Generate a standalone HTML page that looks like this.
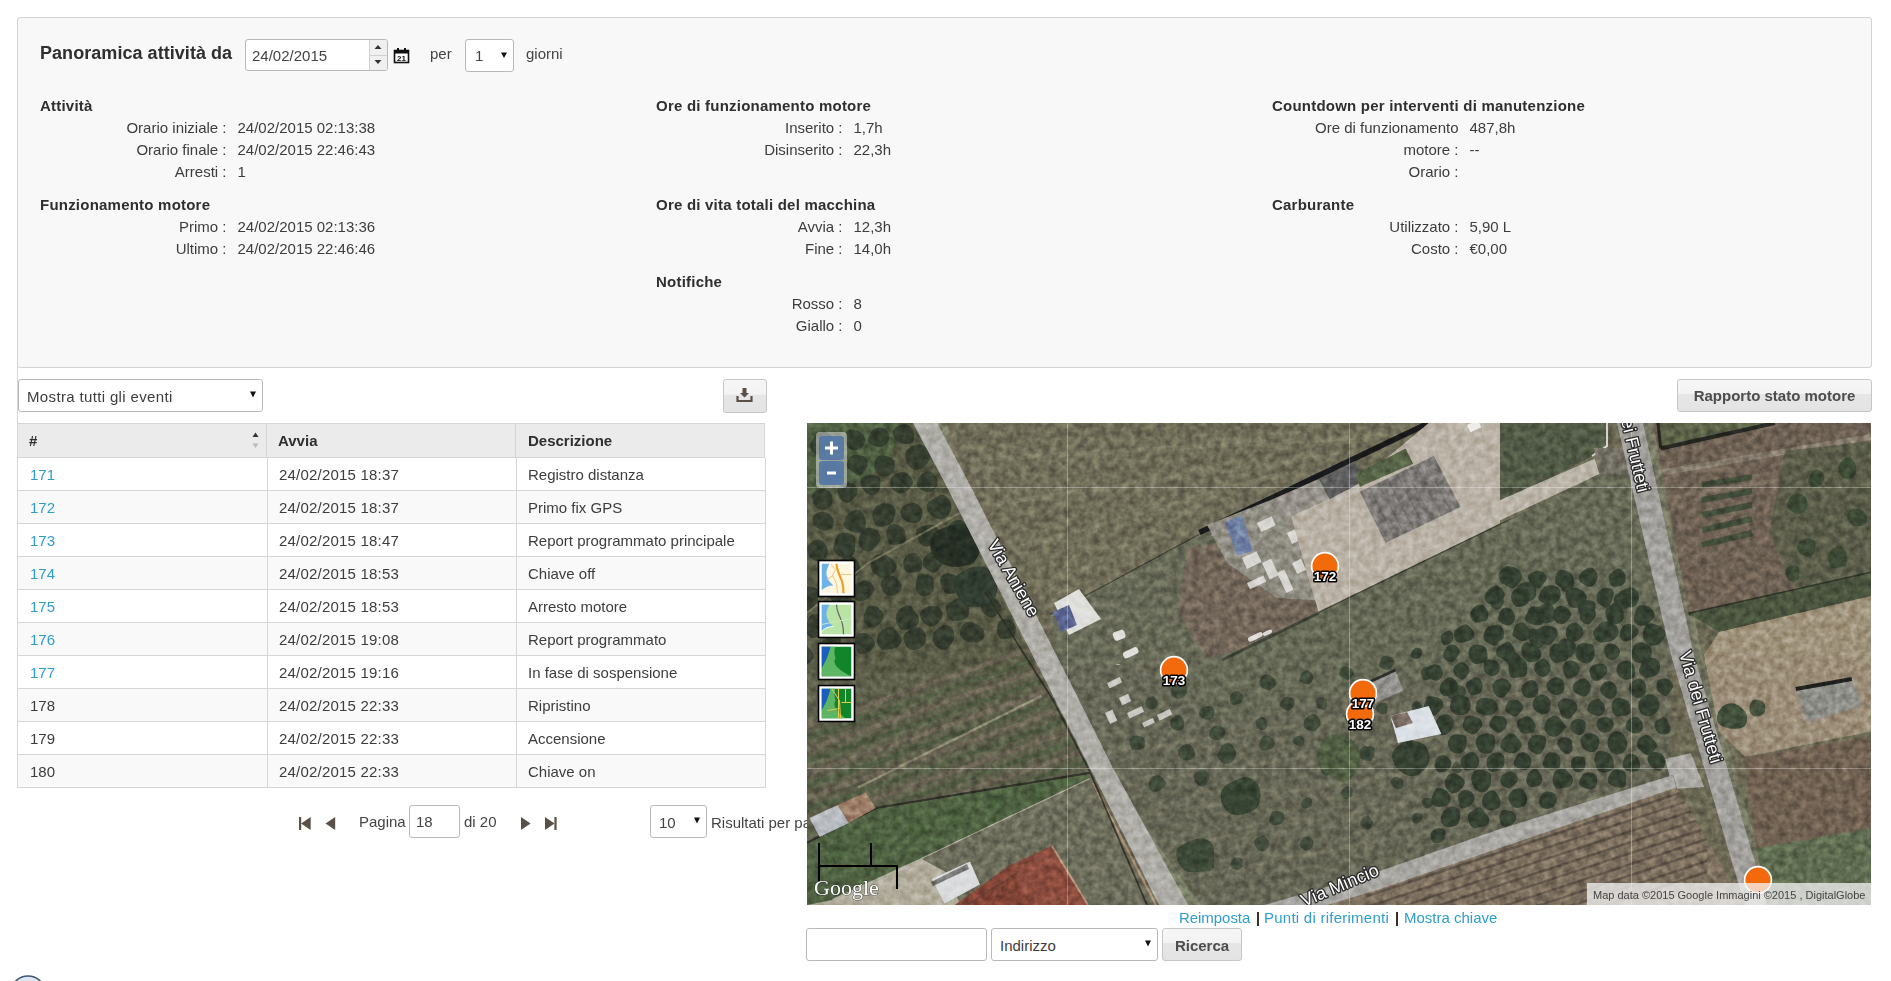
<!DOCTYPE html>
<html><head><meta charset="utf-8">
<style>
*{box-sizing:border-box;margin:0;padding:0}
html,body{width:1891px;height:981px;overflow:hidden;background:#fff}
body{font-family:"Liberation Sans",sans-serif;font-size:15px;color:#333;position:relative}
.a{position:absolute;white-space:nowrap}
#panel{position:absolute;left:17px;top:17px;width:1855px;height:351px;border:1px solid #d3d3d3;border-radius:3px;background:#f8f8f8}
.h{position:absolute;font-weight:bold;line-height:22px;white-space:nowrap;color:#2f2f2f;letter-spacing:0.22px}
.l{position:absolute;line-height:22px;white-space:nowrap;text-align:right;width:300px;color:#3d3d3d}
.v{position:absolute;line-height:22px;white-space:nowrap;color:#3d3d3d}
.inp{position:absolute;background:#fff;border:1px solid #b9b9b9;border-radius:3px}
.btn{position:absolute;border:1px solid #c6c6c6;border-radius:3px;background:linear-gradient(#f6f6f6 0,#f3f3f3 45%,#e6e6e6 46%,#e4e4e4 100%);font-weight:bold;color:#4d4d4d;text-align:center}
.row{position:absolute;left:17px;width:749px;height:33px;border:1px solid #d6d6d6;border-top:0}
.c{position:absolute;top:0;height:32px;line-height:32px;padding-top:1px;color:#3d3d3d;white-space:nowrap}
.c.lnk{color:#2f9dcc}
.vd{position:absolute;top:0;width:1px;height:32px;background:#d6d6d6}
.lk{color:#2f9dcc}
</style></head><body>

<div id="panel"></div>
<div class="h" style="left:40px;top:42px;font-size:18px;letter-spacing:0.05px">Panoramica attività da</div>
<!-- date input -->
<div class="inp" style="left:245px;top:39px;width:143px;height:32px"></div>
<div class="a" style="left:252px;top:45px;line-height:22px;color:#444">24/02/2015</div>
<div class="a" style="left:369px;top:40px;width:18px;height:30px;background:#f0f0f0;border-left:1px solid #d0d0d0;border-radius:0 2px 2px 0"></div>
<div class="a" style="left:370px;top:55px;width:17px;height:1px;background:#d0d0d0"></div>
<svg class="a" style="left:369px;top:40px" width="18" height="30"><path d="M5.5 9 L9 5 L12.5 9 Z M5.5 20 L9 24 L12.5 20 Z" fill="#333"/></svg>
<!-- calendar icon -->
<svg class="a" style="left:393px;top:47px" width="17" height="17" viewBox="0 0 17 17">
<rect x="1.5" y="3.5" width="14" height="12" fill="#fff" stroke="#111" stroke-width="1.6"/>
<rect x="1.5" y="3.5" width="14" height="3" fill="#111"/>
<rect x="4" y="1" width="2" height="4" fill="#111"/><rect x="11" y="1" width="2" height="4" fill="#111"/>
<text x="8.5" y="14.3" font-family="Liberation Sans" font-weight="bold" font-size="8" text-anchor="middle" fill="#111">21</text>
</svg>
<div class="a" style="left:430px;top:43px;line-height:22px;color:#444">per</div>
<div class="inp" style="left:465px;top:39px;width:49px;height:33px"></div>
<div class="a" style="left:475px;top:45px;line-height:22px;color:#444">1</div>
<svg class="a" style="left:500px;top:51px" width="8" height="8"><path d="M1 1.5 L7 1.5 L4 7 Z" fill="#111"/></svg>
<div class="a" style="left:526px;top:43px;line-height:22px;color:#444">giorni</div>

<div class="h" style="left:40px;top:95px">Attività</div>
<div class="l" style="left:-73.5px;top:117px">Orario iniziale :</div>
<div class="v" style="left:237.5px;top:117px">24/02/2015 02:13:38</div>
<div class="l" style="left:-73.5px;top:139px">Orario finale :</div>
<div class="v" style="left:237.5px;top:139px">24/02/2015 22:46:43</div>
<div class="l" style="left:-73.5px;top:161px">Arresti :</div>
<div class="v" style="left:237.5px;top:161px">1</div>
<div class="h" style="left:40px;top:194px">Funzionamento motore</div>
<div class="l" style="left:-73.5px;top:216px">Primo :</div>
<div class="v" style="left:237.5px;top:216px">24/02/2015 02:13:36</div>
<div class="l" style="left:-73.5px;top:238px">Ultimo :</div>
<div class="v" style="left:237.5px;top:238px">24/02/2015 22:46:46</div>
<div class="h" style="left:656px;top:95px">Ore di funzionamento motore</div>
<div class="l" style="left:542.5px;top:117px">Inserito :</div>
<div class="v" style="left:853.5px;top:117px">1,7h</div>
<div class="l" style="left:542.5px;top:139px">Disinserito :</div>
<div class="v" style="left:853.5px;top:139px">22,3h</div>
<div class="h" style="left:656px;top:194px">Ore di vita totali del macchina</div>
<div class="l" style="left:542.5px;top:216px">Avvia :</div>
<div class="v" style="left:853.5px;top:216px">12,3h</div>
<div class="l" style="left:542.5px;top:238px">Fine :</div>
<div class="v" style="left:853.5px;top:238px">14,0h</div>
<div class="h" style="left:656px;top:271px">Notifiche</div>
<div class="l" style="left:542.5px;top:293px">Rosso :</div>
<div class="v" style="left:853.5px;top:293px">8</div>
<div class="l" style="left:542.5px;top:315px">Giallo :</div>
<div class="v" style="left:853.5px;top:315px">0</div>
<div class="h" style="left:1272px;top:95px">Countdown per interventi di manutenzione</div>
<div class="l" style="left:1158.5px;top:117px">Ore di funzionamento</div>
<div class="v" style="left:1469.5px;top:117px">487,8h</div>
<div class="l" style="left:1158.5px;top:139px">motore :</div>
<div class="v" style="left:1469.5px;top:139px">--</div>
<div class="l" style="left:1158.5px;top:161px">Orario :</div>
<div class="h" style="left:1272px;top:194px">Carburante</div>
<div class="l" style="left:1158.5px;top:216px">Utilizzato :</div>
<div class="v" style="left:1469.5px;top:216px">5,90 L</div>
<div class="l" style="left:1158.5px;top:238px">Costo :</div>
<div class="v" style="left:1469.5px;top:238px">€0,00</div>

<!-- left column border -->
<div class="a" style="left:17px;top:367px;width:1px;height:421px;background:#d6d6d6"></div>
<!-- select events -->
<div class="inp" style="left:18px;top:379px;width:245px;height:33px"></div>
<div class="a" style="left:27px;top:386px;line-height:22px;color:#3d3d3d;letter-spacing:0.35px">Mostra tutti gli eventi</div>
<svg class="a" style="left:249px;top:390px" width="8" height="9"><path d="M1 1.5 L7 1.5 L4 7.5 Z" fill="#111"/></svg>
<!-- export button -->
<div class="btn" style="left:723px;top:379px;width:44px;height:34px"></div>
<svg class="a" style="left:736px;top:387px" width="17" height="16" viewBox="0 0 17 16"><path d="M6.5 1 H10.5 V6 H13 L8.5 10.5 L4 6 H6.5 Z" fill="#5a5048"/><path d="M1.5 9 V14 H15.5 V9" fill="none" stroke="#5a5048" stroke-width="2.2"/></svg>
<!-- table header -->
<div class="a" style="left:17px;top:423px;width:748px;height:35px;background:#ebebeb;border:1px solid #d6d6d6"></div>
<div class="a" style="left:266px;top:423px;width:1px;height:35px;background:#d6d6d6"></div>
<div class="a" style="left:515px;top:423px;width:1px;height:35px;background:#d6d6d6"></div>
<div class="a" style="left:29px;top:430px;line-height:22px;font-weight:bold;color:#2f2f2f">#</div>
<div class="a" style="left:278px;top:430px;line-height:22px;font-weight:bold;color:#2f2f2f">Avvia</div>
<div class="a" style="left:528px;top:430px;line-height:22px;font-weight:bold;color:#2f2f2f">Descrizione</div>
<svg class="a" style="left:251px;top:431px" width="9" height="19"><path d="M1.5 6 L4.5 1.5 L7.5 6 Z" fill="#333"/><path d="M1.5 12.5 L4.5 17 L7.5 12.5 Z" fill="#bbb"/></svg>
<div class="row" style="top:458px;background:#fff"><div class="vd" style="left:249px"></div><div class="vd" style="left:498px"></div><div class="c lnk" style="left:12px">171</div><div class="c" style="left:261px;letter-spacing:0.2px">24/02/2015 18:37</div><div class="c" style="left:510px">Registro distanza</div></div>
<div class="row" style="top:491px;background:#f9f9f9"><div class="vd" style="left:249px"></div><div class="vd" style="left:498px"></div><div class="c lnk" style="left:12px">172</div><div class="c" style="left:261px;letter-spacing:0.2px">24/02/2015 18:37</div><div class="c" style="left:510px">Primo fix GPS</div></div>
<div class="row" style="top:524px;background:#fff"><div class="vd" style="left:249px"></div><div class="vd" style="left:498px"></div><div class="c lnk" style="left:12px">173</div><div class="c" style="left:261px;letter-spacing:0.2px">24/02/2015 18:47</div><div class="c" style="left:510px">Report programmato principale</div></div>
<div class="row" style="top:557px;background:#f9f9f9"><div class="vd" style="left:249px"></div><div class="vd" style="left:498px"></div><div class="c lnk" style="left:12px">174</div><div class="c" style="left:261px;letter-spacing:0.2px">24/02/2015 18:53</div><div class="c" style="left:510px">Chiave off</div></div>
<div class="row" style="top:590px;background:#fff"><div class="vd" style="left:249px"></div><div class="vd" style="left:498px"></div><div class="c lnk" style="left:12px">175</div><div class="c" style="left:261px;letter-spacing:0.2px">24/02/2015 18:53</div><div class="c" style="left:510px">Arresto motore</div></div>
<div class="row" style="top:623px;background:#f9f9f9"><div class="vd" style="left:249px"></div><div class="vd" style="left:498px"></div><div class="c lnk" style="left:12px">176</div><div class="c" style="left:261px;letter-spacing:0.2px">24/02/2015 19:08</div><div class="c" style="left:510px">Report programmato</div></div>
<div class="row" style="top:656px;background:#fff"><div class="vd" style="left:249px"></div><div class="vd" style="left:498px"></div><div class="c lnk" style="left:12px">177</div><div class="c" style="left:261px;letter-spacing:0.2px">24/02/2015 19:16</div><div class="c" style="left:510px">In fase di sospensione</div></div>
<div class="row" style="top:689px;background:#f9f9f9"><div class="vd" style="left:249px"></div><div class="vd" style="left:498px"></div><div class="c " style="left:12px">178</div><div class="c" style="left:261px;letter-spacing:0.2px">24/02/2015 22:33</div><div class="c" style="left:510px">Ripristino</div></div>
<div class="row" style="top:722px;background:#fff"><div class="vd" style="left:249px"></div><div class="vd" style="left:498px"></div><div class="c " style="left:12px">179</div><div class="c" style="left:261px;letter-spacing:0.2px">24/02/2015 22:33</div><div class="c" style="left:510px">Accensione</div></div>
<div class="row" style="top:755px;background:#f9f9f9"><div class="vd" style="left:249px"></div><div class="vd" style="left:498px"></div><div class="c " style="left:12px">180</div><div class="c" style="left:261px;letter-spacing:0.2px">24/02/2015 22:33</div><div class="c" style="left:510px">Chiave on</div></div>
<!-- pagination -->
<svg class="a" style="left:296px;top:814px" width="270" height="20" viewBox="0 0 270 20">
<g fill="#5b5046"><rect x="3" y="3" width="2.2" height="13"/><path d="M5 9.5 L14.7 3 V16 Z"/><path d="M29.5 9.5 L39.2 3 V16 Z"/>
<path d="M225 3 L234.6 9.5 L225 16 Z"/><path d="M249 3 L258.6 9.5 L249 16 Z"/><rect x="258.4" y="3" width="2.2" height="13"/></g>
</svg>
<div class="a" style="left:359px;top:811px;line-height:22px;color:#444">Pagina</div>
<div class="inp" style="left:409px;top:805px;width:51px;height:33px"></div>
<div class="a" style="left:416px;top:811px;line-height:22px;color:#444">18</div>
<div class="a" style="left:464px;top:811px;line-height:22px;color:#444">di 20</div>
<div class="inp" style="left:650px;top:805px;width:57px;height:33px"></div>
<div class="a" style="left:659px;top:812px;line-height:22px;color:#444">10</div>
<svg class="a" style="left:693px;top:816px" width="8" height="9"><path d="M1 1.5 L7 1.5 L4 7.5 Z" fill="#111"/></svg>
<div class="a" style="left:711px;top:812px;line-height:22px;color:#444">Risultati per pagina</div>
<!-- rapporto button -->
<div class="btn" style="left:1677px;top:379px;width:195px;height:33px;line-height:31px">Rapporto stato motore</div>

<svg class="a" style="left:807px;top:423px" width="1064" height="482" viewBox="0 0 1064 482"><defs><filter id="nz" x="0" y="0" width="100%" height="100%" color-interpolation-filters="sRGB"><feTurbulence type="fractalNoise" baseFrequency="0.14" numOctaves="3" seed="5"/><feColorMatrix values="1.5 0 0 0 -0.25  1.5 0 0 0 -0.25  1.5 0 0 0 -0.25  0 0 0 0 1"/></filter></defs><rect width="1064" height="482" fill="#6b6954"/>
<path d="M0.0,0.0 L108.0,0.0 L140.0,64.0 L232.0,250.0 L0.0,250.0Z" fill="#595b46" />
<path d="M0.0,0.0 L100.0,0.0 L80.0,40.0 L40.0,64.0 L0.0,70.0Z" fill="#4f5f42" />
<path d="M0.0,250.0 L232.0,250.0 L283.0,350.0 L70.0,385.0 L0.0,420.0Z" fill="#5e5f4b" />
<path d="M0.0,303.0 L290.0,203.0" fill="none" stroke="#716759" stroke-width="4.5" opacity="0.75"/>
<path d="M0.0,315.0 L290.0,215.0" fill="none" stroke="#4e5b40" stroke-width="4.5" opacity="0.75"/>
<path d="M0.0,327.0 L290.0,227.0" fill="none" stroke="#716759" stroke-width="4.5" opacity="0.75"/>
<path d="M0.0,339.0 L290.0,239.0" fill="none" stroke="#4e5b40" stroke-width="4.5" opacity="0.75"/>
<path d="M0.0,351.0 L290.0,251.0" fill="none" stroke="#716759" stroke-width="4.5" opacity="0.75"/>
<path d="M0.0,363.0 L290.0,263.0" fill="none" stroke="#4e5b40" stroke-width="4.5" opacity="0.75"/>
<path d="M0.0,375.0 L290.0,275.0" fill="none" stroke="#716759" stroke-width="4.5" opacity="0.75"/>
<path d="M0.0,387.0 L290.0,287.0" fill="none" stroke="#4e5b40" stroke-width="4.5" opacity="0.75"/>
<path d="M0.0,399.0 L290.0,299.0" fill="none" stroke="#716759" stroke-width="4.5" opacity="0.75"/>
<path d="M0.0,411.0 L290.0,311.0" fill="none" stroke="#4e5b40" stroke-width="4.5" opacity="0.75"/>
<path d="M0.0,423.0 L290.0,323.0" fill="none" stroke="#716759" stroke-width="4.5" opacity="0.75"/>
<path d="M0.0,435.0 L290.0,335.0" fill="none" stroke="#4e5b40" stroke-width="4.5" opacity="0.75"/>
<path d="M51.0,364.5 L234.5,272.8" fill="none" stroke="#8e8973" stroke-width="2.5" />
<path d="M0.0,420.0 L70.0,385.0 L283.0,350.0" fill="none" stroke="#303029" stroke-width="2.5" />
<path d="M0.0,421.0 L70.0,386.0 L283.0,351.0 L283.0,356.0 L114.7,436.0 L25.5,477.0 L0.0,482.0Z" fill="#4f6242" />
<circle cx="30" cy="430" r="9" fill="#445a38" opacity="0.6"/>
<circle cx="70" cy="418" r="9" fill="#445a38" opacity="0.6"/>
<circle cx="110" cy="406" r="9" fill="#445a38" opacity="0.6"/>
<circle cx="150" cy="394" r="9" fill="#445a38" opacity="0.6"/>
<circle cx="190" cy="382" r="9" fill="#445a38" opacity="0.6"/>
<circle cx="230" cy="370" r="9" fill="#445a38" opacity="0.6"/>
<path d="M0.0,482.0 L25.5,477.0 L114.7,436.0 L143.0,451.0 L153.0,482.0Z" fill="#b0ab9a" />
<path d="M25.5,477.0 L114.7,436.0 L283.0,356.0" fill="none" stroke="#aeab9c" stroke-width="2" />
<path d="M114.7,436.0 L283.0,356.0 L295.0,374.0 L349.0,482.0 L153.0,482.0 L143.0,451.0Z" fill="#6d6d5c" />
<path d="M286.0,360.0 L349.0,482.0" fill="none" stroke="#ab8c6f" stroke-width="2.2" />
<path d="M2.5,395.0 L30.6,382.0 L42.0,400.0 L12.7,414.0Z" fill="#b7bbc0" />
<path d="M30.6,382.0 L58.6,369.6 L68.8,385.0 L42.0,400.0Z" fill="#9c7d67" />
<path d="M125.0,456.0 L163.0,438.5 L173.0,461.4 L137.6,480.5Z" fill="#dbdcdd" />
<path d="M124.0,459.0 L160.0,441.0 L162.0,446.0 L126.0,463.0Z" fill="#3d3d3a" opacity="0.6"/>
<path d="M147.8,482.0 L201.0,443.6 L244.7,423.0 L280.0,482.0Z" fill="rgb(128,68,54)" />
<path d="M201.0,443.6 L244.7,423.0 L280.0,482.0 L225.0,482.0Z" fill="rgb(138,76,62)" />
<path d="M160.0,482.0 L210.0,450.0" fill="none" stroke="#6b3d34" stroke-width="1.5" />
<path d="M245.0,423.0 L281.0,482.0" fill="none" stroke="#b39578" stroke-width="2" />
<path d="M25.3,23.8 Q22.6,27.1 19.5,28.8 Q16.4,30.6 12.1,31.4 Q7.8,32.2 5.0,28.6 Q2.2,25.0 3.4,20.9 Q4.6,16.8 7.0,14.2 Q9.4,11.5 13.1,9.7 Q16.8,7.8 21.0,9.7 Q25.1,11.7 26.6,16.1 Q28.0,20.5 25.3,23.8Z" fill="#2f382b" opacity="0.85"/>
<path d="M57.4,20.7 Q55.8,24.6 52.1,26.2 Q48.3,27.7 44.8,26.7 Q41.2,25.7 39.5,22.8 Q37.8,19.8 38.0,16.8 Q38.1,13.7 39.1,9.8 Q40.1,5.8 44.1,6.5 Q48.1,7.2 51.7,8.3 Q55.2,9.3 57.1,13.0 Q58.9,16.7 57.4,20.7Z" fill="#2f382b" opacity="0.85"/>
<path d="M81.5,18.3 Q79.7,22.0 76.3,23.3 Q72.8,24.6 69.5,23.8 Q66.3,23.0 63.1,20.9 Q60.0,18.7 61.2,15.2 Q62.5,11.6 64.3,8.9 Q66.2,6.2 69.6,5.0 Q73.0,3.7 76.8,5.3 Q80.5,6.8 81.9,10.7 Q83.3,14.7 81.5,18.3Z" fill="#2f382b" opacity="0.85"/>
<path d="M107.2,15.5 Q107.0,19.9 102.7,20.7 Q98.3,21.5 95.0,20.5 Q91.6,19.5 89.0,17.2 Q86.3,14.8 85.9,11.0 Q85.5,7.1 88.5,4.8 Q91.5,2.5 94.9,1.7 Q98.3,0.8 101.7,2.3 Q105.1,3.8 106.2,7.5 Q107.4,11.1 107.2,15.5Z" fill="#2f382b" opacity="0.85"/>
<path d="M35.4,51.9 Q34.6,55.5 31.5,58.6 Q28.4,61.6 23.7,61.0 Q19.1,60.4 16.7,56.5 Q14.3,52.6 14.3,48.3 Q14.2,44.0 17.1,40.9 Q20.0,37.8 23.9,38.1 Q27.8,38.3 30.6,40.2 Q33.5,42.1 34.8,45.2 Q36.2,48.3 35.4,51.9Z" fill="#2f382b" opacity="0.85"/>
<path d="M59.9,45.0 Q58.2,48.5 55.0,50.9 Q51.8,53.3 48.7,51.0 Q45.6,48.7 42.6,46.9 Q39.6,45.1 39.9,41.5 Q40.2,38.0 42.2,34.9 Q44.2,31.8 47.8,31.9 Q51.4,32.0 55.2,32.8 Q59.1,33.6 60.3,37.5 Q61.6,41.4 59.9,45.0Z" fill="#2f382b" opacity="0.85"/>
<path d="M87.3,46.1 Q86.4,49.8 83.1,52.0 Q79.8,54.3 75.9,53.3 Q72.1,52.3 69.6,49.3 Q67.2,46.3 67.1,42.4 Q66.9,38.5 69.3,35.3 Q71.7,32.1 75.6,32.4 Q79.4,32.8 82.8,34.1 Q86.2,35.3 87.3,38.9 Q88.3,42.5 87.3,46.1Z" fill="#2f382b" opacity="0.85"/>
<path d="M122.5,37.3 Q120.0,41.2 116.5,44.2 Q113.0,47.2 108.2,46.5 Q103.3,45.8 100.8,41.8 Q98.3,37.8 98.2,33.3 Q98.1,28.8 101.3,25.8 Q104.5,22.8 108.7,21.7 Q112.8,20.5 116.7,22.7 Q120.7,24.9 122.8,29.1 Q125.0,33.3 122.5,37.3Z" fill="#2f382b" opacity="0.85"/>
<path d="M25.1,79.7 Q24.3,83.6 20.6,85.5 Q16.9,87.4 13.1,86.5 Q9.2,85.5 7.4,82.3 Q5.5,79.1 4.9,75.5 Q4.2,71.8 6.9,69.1 Q9.5,66.4 13.1,66.1 Q16.6,65.7 20.2,66.9 Q23.8,68.2 24.8,71.9 Q25.8,75.7 25.1,79.7Z" fill="#2f382b" opacity="0.85"/>
<path d="M49.2,72.7 Q46.8,75.4 44.4,78.0 Q42.1,80.6 38.6,79.7 Q35.1,78.9 33.3,76.0 Q31.4,73.1 30.6,69.6 Q29.7,66.1 32.4,63.5 Q35.0,60.9 38.6,60.1 Q42.1,59.2 45.8,60.7 Q49.5,62.2 50.5,66.0 Q51.6,69.9 49.2,72.7Z" fill="#2f382b" opacity="0.85"/>
<path d="M72.6,65.4 Q72.0,68.6 69.1,71.1 Q66.3,73.6 62.9,72.0 Q59.4,70.5 57.4,67.9 Q55.3,65.4 53.9,61.6 Q52.5,57.8 55.5,55.0 Q58.5,52.1 62.3,51.9 Q66.1,51.6 70.0,52.9 Q73.8,54.1 73.5,58.1 Q73.1,62.1 72.6,65.4Z" fill="#2f382b" opacity="0.85"/>
<path d="M104.9,62.6 Q102.7,65.8 99.9,67.9 Q97.1,70.1 93.1,70.1 Q89.0,70.2 86.1,67.0 Q83.2,63.9 83.2,59.5 Q83.3,55.1 86.6,52.7 Q89.9,50.3 93.6,49.3 Q97.2,48.2 100.2,50.5 Q103.1,52.8 105.1,56.2 Q107.0,59.5 104.9,62.6Z" fill="#2f382b" opacity="0.85"/>
<path d="M130.3,61.8 Q129.6,65.6 126.1,67.6 Q122.6,69.7 118.7,68.8 Q114.8,67.8 111.9,65.0 Q108.9,62.2 110.2,58.4 Q111.4,54.6 113.7,52.3 Q115.9,49.9 119.1,48.8 Q122.3,47.7 125.1,49.7 Q127.9,51.7 129.5,54.8 Q131.1,57.9 130.3,61.8Z" fill="#2f382b" opacity="0.85"/>
<path d="M26.8,101.3 Q25.9,105.0 22.5,106.6 Q19.1,108.3 15.7,107.3 Q12.2,106.4 9.0,104.1 Q5.8,101.9 5.5,97.6 Q5.3,93.4 8.6,91.0 Q12.0,88.6 15.4,88.7 Q18.8,88.8 21.4,90.4 Q24.0,92.0 25.8,94.9 Q27.7,97.7 26.8,101.3Z" fill="#2f382b" opacity="0.85"/>
<path d="M58.9,102.1 Q58.9,106.5 54.9,108.5 Q50.8,110.5 46.7,109.2 Q42.7,107.9 39.0,105.2 Q35.4,102.5 37.1,98.4 Q38.8,94.2 41.0,91.3 Q43.1,88.3 46.9,86.9 Q50.7,85.5 53.6,88.3 Q56.4,91.1 57.7,94.4 Q58.9,97.7 58.9,102.1Z" fill="#2f382b" opacity="0.85"/>
<path d="M86.9,96.6 Q85.4,100.1 82.2,101.7 Q78.9,103.3 74.8,103.9 Q70.6,104.5 68.1,100.9 Q65.7,97.3 65.3,93.0 Q64.9,88.6 67.7,85.2 Q70.5,81.7 75.1,80.5 Q79.6,79.4 84.0,81.6 Q88.4,83.7 88.4,88.4 Q88.4,93.1 86.9,96.6Z" fill="#2f382b" opacity="0.85"/>
<path d="M114.9,94.1 Q114.2,98.0 110.5,99.4 Q106.8,100.7 103.5,99.8 Q100.1,98.8 96.9,96.6 Q93.8,94.4 93.3,90.1 Q92.7,85.8 96.2,83.5 Q99.7,81.1 103.3,80.3 Q106.9,79.4 110.3,81.2 Q113.7,83.0 114.7,86.6 Q115.7,90.3 114.9,94.1Z" fill="#2f382b" opacity="0.85"/>
<path d="M143.6,88.3 Q142.3,92.3 138.7,94.8 Q135.0,97.3 130.9,95.8 Q126.8,94.3 123.4,91.6 Q120.0,88.8 119.8,84.1 Q119.5,79.4 123.5,77.4 Q127.5,75.4 131.3,72.9 Q135.1,70.3 138.9,73.1 Q142.7,75.8 143.8,80.0 Q144.9,84.2 143.6,88.3Z" fill="#2f382b" opacity="0.85"/>
<path d="M20.4,131.5 Q19.4,135.1 16.3,137.5 Q13.1,140.0 9.5,138.3 Q6.0,136.7 3.4,134.2 Q0.8,131.7 0.2,127.8 Q-0.3,123.8 2.4,120.8 Q5.1,117.8 9.1,116.8 Q13.1,115.8 16.0,118.6 Q18.9,121.3 20.1,124.6 Q21.3,128.0 20.4,131.5Z" fill="#2f382b" opacity="0.85"/>
<path d="M48.0,126.8 Q47.7,131.0 43.9,133.4 Q40.1,135.9 35.7,134.7 Q31.4,133.6 28.5,130.3 Q25.5,127.1 26.6,123.1 Q27.7,119.0 29.3,114.9 Q30.8,110.7 35.5,109.7 Q40.2,108.7 44.4,111.1 Q48.6,113.6 48.5,118.1 Q48.4,122.7 48.0,126.8Z" fill="#2f382b" opacity="0.85"/>
<path d="M72.2,119.3 Q69.9,122.8 66.9,126.0 Q63.9,129.1 59.4,128.2 Q54.9,127.3 53.0,123.4 Q51.2,119.6 51.7,116.0 Q52.3,112.5 54.1,109.2 Q55.8,106.0 59.7,105.0 Q63.6,104.1 67.5,105.9 Q71.4,107.6 72.9,111.7 Q74.5,115.8 72.2,119.3Z" fill="#2f382b" opacity="0.85"/>
<path d="M99.0,115.7 Q99.2,119.8 95.1,120.4 Q91.0,121.0 86.9,121.9 Q82.9,122.7 81.4,118.8 Q79.8,115.0 79.5,111.4 Q79.2,107.9 81.0,104.2 Q82.9,100.5 87.0,101.1 Q91.0,101.8 94.0,103.4 Q97.0,105.1 97.9,108.3 Q98.8,111.6 99.0,115.7Z" fill="#2f382b" opacity="0.85"/>
<path d="M132.4,115.4 Q131.2,119.6 127.2,121.5 Q123.3,123.5 118.8,123.2 Q114.3,123.0 112.3,119.1 Q110.3,115.2 109.3,110.9 Q108.4,106.6 112.3,104.6 Q116.2,102.7 119.6,101.9 Q122.9,101.0 126.5,102.3 Q130.1,103.7 131.9,107.4 Q133.7,111.2 132.4,115.4Z" fill="#2f382b" opacity="0.85"/>
<path d="M160.2,111.8 Q158.6,115.5 155.2,117.3 Q151.7,119.0 147.6,118.9 Q143.6,118.8 141.4,115.4 Q139.2,111.9 139.7,108.3 Q140.2,104.6 142.4,101.8 Q144.5,99.0 148.2,97.4 Q151.9,95.9 155.7,97.9 Q159.5,100.0 160.6,104.0 Q161.7,108.1 160.2,111.8Z" fill="#2f382b" opacity="0.85"/>
<path d="M31.6,156.8 Q30.4,160.9 26.5,162.2 Q22.5,163.5 18.8,162.9 Q15.1,162.3 13.4,159.2 Q11.7,156.0 11.1,152.5 Q10.4,149.1 12.9,146.3 Q15.3,143.5 18.9,142.6 Q22.6,141.8 25.0,144.4 Q27.4,147.1 30.1,149.9 Q32.8,152.8 31.6,156.8Z" fill="#2f382b" opacity="0.85"/>
<path d="M52.2,148.7 Q50.5,152.6 47.0,155.7 Q43.5,158.8 39.0,157.4 Q34.4,156.1 31.7,152.6 Q29.0,149.1 28.5,144.5 Q28.0,140.0 31.8,137.7 Q35.6,135.4 39.4,133.6 Q43.3,131.8 46.9,134.3 Q50.5,136.7 52.2,140.7 Q53.9,144.7 52.2,148.7Z" fill="#2f382b" opacity="0.85"/>
<path d="M88.2,147.5 Q85.3,151.3 81.9,153.8 Q78.5,156.3 74.6,154.8 Q70.8,153.3 67.7,150.7 Q64.5,148.0 63.7,143.4 Q62.8,138.8 65.8,134.9 Q68.9,131.0 73.7,131.1 Q78.5,131.2 82.0,133.7 Q85.4,136.1 88.3,139.9 Q91.2,143.8 88.2,147.5Z" fill="#2f382b" opacity="0.85"/>
<path d="M115.2,144.2 Q114.4,148.2 110.4,148.7 Q106.4,149.2 102.7,149.8 Q98.9,150.4 97.8,146.8 Q96.6,143.2 96.3,140.1 Q95.9,136.9 98.0,134.4 Q100.0,131.9 103.4,130.4 Q106.8,128.9 109.7,131.3 Q112.5,133.8 114.3,137.0 Q116.0,140.2 115.2,144.2Z" fill="#2f382b" opacity="0.85"/>
<path d="M135.1,142.1 Q132.9,145.1 130.3,148.1 Q127.7,151.0 124.2,149.2 Q120.8,147.3 117.9,145.1 Q115.1,142.9 115.6,139.2 Q116.1,135.6 118.4,133.0 Q120.6,130.5 124.1,129.2 Q127.5,127.9 130.7,130.0 Q133.9,132.0 135.6,135.5 Q137.3,139.0 135.1,142.1Z" fill="#2f382b" opacity="0.85"/>
<path d="M169.0,136.8 Q167.9,140.4 164.4,141.6 Q160.9,142.8 157.6,142.3 Q154.2,141.8 151.2,139.5 Q148.2,137.2 148.1,133.2 Q148.1,129.1 150.8,126.2 Q153.6,123.3 157.5,122.0 Q161.4,120.6 164.8,123.1 Q168.2,125.6 169.1,129.4 Q170.1,133.2 169.0,136.8Z" fill="#2f382b" opacity="0.85"/>
<path d="M10.6,179.1 Q10.2,183.5 6.2,186.0 Q2.1,188.5 -2.7,187.8 Q-7.5,187.2 -9.4,182.9 Q-11.3,178.7 -11.3,174.7 Q-11.3,170.7 -9.4,166.4 Q-7.6,162.1 -3.0,162.8 Q1.6,163.6 6.4,164.3 Q11.1,165.1 11.1,169.9 Q11.0,174.7 10.6,179.1Z" fill="#2f382b" opacity="0.85"/>
<path d="M44.5,178.7 Q43.4,182.4 40.3,185.5 Q37.1,188.6 33.0,186.8 Q29.0,185.0 26.8,181.9 Q24.6,178.7 23.0,174.5 Q21.3,170.2 25.0,167.3 Q28.6,164.4 32.9,162.8 Q37.1,161.3 40.1,164.7 Q43.0,168.1 44.3,171.6 Q45.6,175.1 44.5,178.7Z" fill="#2f382b" opacity="0.85"/>
<path d="M65.5,170.9 Q63.0,173.9 60.3,175.9 Q57.7,177.8 53.8,178.1 Q49.9,178.4 46.8,175.4 Q43.7,172.4 43.6,167.9 Q43.5,163.4 47.3,161.5 Q51.1,159.6 54.5,158.2 Q57.9,156.8 61.7,158.4 Q65.4,160.0 66.7,164.0 Q68.0,168.0 65.5,170.9Z" fill="#2f382b" opacity="0.85"/>
<path d="M93.9,166.8 Q91.6,170.0 88.6,171.5 Q85.5,173.0 82.2,172.5 Q78.9,172.0 76.9,169.4 Q74.8,166.7 73.8,163.1 Q72.7,159.4 75.4,156.4 Q78.0,153.4 81.9,152.6 Q85.9,151.8 88.7,154.4 Q91.5,157.0 93.8,160.3 Q96.2,163.5 93.9,166.8Z" fill="#2f382b" opacity="0.85"/>
<path d="M126.7,165.3 Q126.6,169.2 123.1,171.5 Q119.6,173.9 115.4,173.0 Q111.2,172.2 110.0,168.3 Q108.9,164.5 108.9,161.4 Q109.0,158.4 110.1,154.5 Q111.1,150.6 115.2,150.8 Q119.2,151.0 122.8,152.5 Q126.4,153.9 126.6,157.6 Q126.9,161.4 126.7,165.3Z" fill="#2f382b" opacity="0.85"/>
<path d="M153.2,164.2 Q152.0,167.7 148.7,169.5 Q145.3,171.2 141.5,170.9 Q137.7,170.5 136.4,167.1 Q135.0,163.7 133.6,160.1 Q132.3,156.5 134.7,153.1 Q137.2,149.7 141.2,150.4 Q145.2,151.0 148.5,152.3 Q151.8,153.6 153.1,157.1 Q154.4,160.6 153.2,164.2Z" fill="#2f382b" opacity="0.85"/>
<path d="M178.6,163.3 Q176.8,166.8 173.6,168.6 Q170.4,170.4 166.4,170.4 Q162.4,170.5 160.8,166.9 Q159.1,163.3 157.2,159.2 Q155.3,155.1 158.5,151.6 Q161.7,148.1 166.3,147.5 Q170.8,146.9 175.0,148.9 Q179.2,150.9 179.7,155.4 Q180.3,159.9 178.6,163.3Z" fill="#2f382b" opacity="0.85"/>
<path d="M20.5,207.1 Q19.5,211.1 15.8,213.0 Q12.1,214.9 7.6,215.1 Q3.0,215.4 0.3,211.5 Q-2.4,207.7 -1.3,203.6 Q-0.1,199.4 1.5,195.3 Q3.2,191.2 7.7,190.8 Q12.3,190.3 16.2,192.5 Q20.1,194.7 20.8,198.9 Q21.5,203.1 20.5,207.1Z" fill="#2f382b" opacity="0.85"/>
<path d="M49.4,203.0 Q48.9,207.6 44.6,210.0 Q40.4,212.4 35.8,211.2 Q31.3,209.9 28.2,206.5 Q25.1,203.0 25.1,198.4 Q25.1,193.7 28.5,190.8 Q31.9,188.0 36.1,186.5 Q40.3,185.1 43.1,188.4 Q45.9,191.7 47.9,195.0 Q49.9,198.4 49.4,203.0Z" fill="#2f382b" opacity="0.85"/>
<path d="M75.7,197.1 Q73.6,200.0 71.1,202.2 Q68.5,204.5 64.7,204.4 Q60.8,204.3 58.3,201.2 Q55.8,198.1 56.5,194.4 Q57.3,190.7 58.8,186.8 Q60.2,182.9 64.5,182.7 Q68.8,182.5 71.7,185.0 Q74.7,187.4 76.2,190.8 Q77.7,194.2 75.7,197.1Z" fill="#2f382b" opacity="0.85"/>
<path d="M111.6,199.3 Q110.1,203.2 106.4,205.0 Q102.8,206.8 98.2,207.3 Q93.6,207.8 91.3,203.8 Q88.9,199.8 88.8,195.4 Q88.6,191.0 91.4,187.5 Q94.2,184.0 98.7,182.7 Q103.2,181.5 105.8,185.3 Q108.3,189.1 110.7,192.3 Q113.1,195.4 111.6,199.3Z" fill="#2f382b" opacity="0.85"/>
<path d="M134.0,196.5 Q131.7,200.0 128.6,202.2 Q125.4,204.3 122.0,203.0 Q118.5,201.6 116.0,199.1 Q113.6,196.7 113.2,192.9 Q112.8,189.2 115.6,186.8 Q118.4,184.4 121.8,183.4 Q125.3,182.5 129.6,183.4 Q133.9,184.3 135.2,188.7 Q136.4,193.1 134.0,196.5Z" fill="#2f382b" opacity="0.85"/>
<path d="M161.8,190.6 Q161.2,195.0 157.0,196.5 Q152.8,198.0 148.3,198.1 Q143.7,198.2 141.4,194.3 Q139.1,190.4 138.8,186.0 Q138.4,181.7 142.1,179.7 Q145.8,177.6 149.3,175.9 Q152.8,174.2 156.7,176.1 Q160.5,177.9 161.5,182.0 Q162.4,186.2 161.8,190.6Z" fill="#2f382b" opacity="0.85"/>
<path d="M193.3,188.0 Q190.7,190.9 188.2,193.0 Q185.6,195.2 182.5,194.1 Q179.3,192.9 176.8,190.8 Q174.2,188.7 174.0,185.1 Q173.7,181.5 176.6,179.6 Q179.5,177.7 182.7,175.5 Q185.9,173.3 188.7,176.0 Q191.5,178.7 193.7,181.9 Q195.8,185.1 193.3,188.0Z" fill="#2f382b" opacity="0.85"/>
<path d="M6.1,235.5 Q4.3,239.0 1.0,240.7 Q-2.3,242.4 -6.3,242.5 Q-10.4,242.6 -12.9,239.3 Q-15.4,236.0 -14.8,232.1 Q-14.2,228.3 -12.4,224.6 Q-10.5,221.0 -6.4,221.2 Q-2.3,221.3 0.4,223.6 Q3.1,225.8 5.5,228.9 Q7.9,231.9 6.1,235.5Z" fill="#2f382b" opacity="0.85"/>
<path d="M32.8,226.1 Q31.9,229.1 29.4,232.0 Q26.8,234.8 23.1,233.4 Q19.5,232.1 16.2,229.7 Q13.0,227.3 13.3,223.2 Q13.5,219.0 16.9,217.1 Q20.2,215.3 23.6,212.8 Q26.9,210.4 30.7,212.7 Q34.4,214.9 34.1,219.0 Q33.7,223.1 32.8,226.1Z" fill="#2f382b" opacity="0.85"/>
<path d="M67.0,223.9 Q64.9,227.1 61.9,228.9 Q59.0,230.8 55.0,231.0 Q51.1,231.2 49.7,227.5 Q48.4,223.8 47.9,220.4 Q47.3,217.1 49.2,213.6 Q51.1,210.2 55.1,209.9 Q59.1,209.5 62.1,211.8 Q65.0,214.0 67.1,217.3 Q69.2,220.6 67.0,223.9Z" fill="#2f382b" opacity="0.85"/>
<path d="M93.7,219.9 Q91.6,224.2 87.5,225.3 Q83.3,226.4 79.0,226.9 Q74.6,227.3 72.0,223.6 Q69.5,219.9 70.0,215.8 Q70.6,211.7 73.3,209.0 Q76.0,206.3 79.8,204.5 Q83.6,202.8 86.7,205.6 Q89.8,208.5 92.8,212.0 Q95.8,215.6 93.7,219.9Z" fill="#2f382b" opacity="0.85"/>
<path d="M118.1,220.3 Q116.3,223.9 112.9,225.4 Q109.5,226.9 105.7,226.9 Q101.8,226.8 99.6,223.6 Q97.3,220.4 96.6,216.4 Q95.9,212.4 98.9,209.5 Q102.0,206.7 106.0,205.0 Q110.1,203.3 114.0,205.7 Q118.0,208.1 118.9,212.4 Q119.8,216.7 118.1,220.3Z" fill="#2f382b" opacity="0.85"/>
<path d="M146.4,217.2 Q144.9,220.5 142.2,224.1 Q139.4,227.6 134.8,226.6 Q130.2,225.5 127.6,221.9 Q124.9,218.2 125.5,214.0 Q126.1,209.9 128.7,207.0 Q131.4,204.1 135.3,202.5 Q139.2,200.9 142.9,203.4 Q146.5,205.8 147.2,209.8 Q147.9,213.8 146.4,217.2Z" fill="#2f382b" opacity="0.85"/>
<path d="M177.1,213.8 Q175.9,217.9 171.8,218.9 Q167.8,219.9 164.2,219.4 Q160.6,218.9 156.7,216.6 Q152.9,214.4 153.0,209.7 Q153.1,204.9 156.2,201.4 Q159.2,197.9 163.4,199.0 Q167.7,200.0 170.6,201.7 Q173.5,203.3 176.0,206.5 Q178.4,209.6 177.1,213.8Z" fill="#2f382b" opacity="0.85"/>
<path d="M208.4,210.5 Q207.4,214.2 203.9,215.1 Q200.3,216.0 196.7,216.2 Q193.1,216.5 191.6,213.2 Q190.1,210.0 190.0,206.9 Q190.0,203.7 191.4,200.2 Q192.8,196.8 196.7,196.3 Q200.6,195.9 204.0,197.7 Q207.5,199.5 208.4,203.2 Q209.3,206.9 208.4,210.5Z" fill="#2f382b" opacity="0.85"/>
<path d="M172.2,130.3 Q169.7,138.5 161.8,141.6 Q154.0,144.7 145.9,143.9 Q137.8,143.1 130.6,137.4 Q123.4,131.7 123.0,121.8 Q122.5,112.0 130.8,107.6 Q139.1,103.2 146.5,101.7 Q153.9,100.2 163.0,101.8 Q172.2,103.4 173.4,112.7 Q174.7,122.0 172.2,130.3Z" fill="#252d24" opacity="0.95"/>
<path d="M189.0,172.9 Q186.7,180.7 179.1,182.6 Q171.4,184.5 164.3,184.1 Q157.2,183.7 153.1,177.8 Q149.0,171.9 146.9,164.2 Q144.7,156.5 151.1,151.6 Q157.5,146.7 164.8,144.3 Q172.1,141.9 180.1,145.0 Q188.2,148.1 189.7,156.5 Q191.2,165.0 189.0,172.9Z" fill="#2f3b30" opacity="0.9"/>
<path d="M0.0,190.0 L61.0,140.0 L147.0,93.0 L215.0,58.0" fill="none" stroke="#827e64" stroke-width="2" opacity="0.8"/>
<path d="M130.0,0.0 L622.0,0.0 L392.4,109.6 L293.0,165.6 L243.0,192.0 L214.0,150.0 L140.0,64.0Z" fill="#706d59" />
<path d="M150.0,15.0 L620.0,2.0" fill="none" stroke="#696653" stroke-width="5" opacity="0.45"/>
<path d="M162.0,37.0 L590.0,12.0" fill="none" stroke="#837e68" stroke-width="5" opacity="0.45"/>
<path d="M174.0,59.0 L560.0,22.0" fill="none" stroke="#696653" stroke-width="5" opacity="0.45"/>
<path d="M186.0,81.0 L530.0,32.0" fill="none" stroke="#837e68" stroke-width="5" opacity="0.45"/>
<path d="M198.0,103.0 L500.0,42.0" fill="none" stroke="#696653" stroke-width="5" opacity="0.45"/>
<path d="M210.0,125.0 L470.0,52.0" fill="none" stroke="#837e68" stroke-width="5" opacity="0.45"/>
<path d="M222.0,147.0 L440.0,62.0" fill="none" stroke="#696653" stroke-width="5" opacity="0.45"/>
<path d="M234.0,169.0 L410.0,72.0" fill="none" stroke="#837e68" stroke-width="5" opacity="0.45"/>
<path d="M246.0,191.0 L380.0,82.0" fill="none" stroke="#696653" stroke-width="5" opacity="0.45"/>
<path d="M243.0,192.0 L293.0,165.6 L392.4,112.0" fill="none" stroke="#37372e" stroke-width="2.2" />
<path d="M392.4,109.6 L621.7,0.0" fill="none" stroke="#191a1b" stroke-width="5.5" />
<path d="M398.0,117.0 L440.0,97.0" fill="none" stroke="#e3e2de" stroke-width="2.5" />
<path d="M243.0,192.0 L293.0,165.6 L392.0,112.0 L471.0,115.0 L512.0,190.0 L415.0,237.0 L331.0,262.0 L300.0,272.0 L268.0,300.0 L250.0,241.0Z" fill="#686a58" />
<path d="M380.0,125.0 L471.0,112.0 L512.0,190.0 L433.0,227.0 L400.0,235.0 L372.0,190.0Z" fill="#726659" />
<path d="M247.0,180.0 L272.0,166.0 L294.0,196.0 L262.0,212.0Z" fill="#dfdfdc" />
<path d="M246.0,189.0 L262.0,182.0 L270.0,202.0 L254.0,209.0Z" fill="#5a6590" />
<rect x="305" y="210" width="12" height="9" rx="3" fill="#e0dfdb" transform="rotate(-20 305 210)"/>
<rect x="315" y="230" width="16" height="7" rx="3" fill="#e0dfdb" transform="rotate(-25 315 230)"/>
<rect x="300" y="245" width="14" height="7" rx="3" fill="#e0dfdb" transform="rotate(-20 300 245)"/>
<rect x="330" y="290" width="18" height="6" rx="3" fill="#e0dfdb" transform="rotate(-25 330 290)"/>
<rect x="345" y="285" width="12" height="8" rx="3" fill="#e0dfdb" transform="rotate(-20 345 285)"/>
<rect x="440" y="215" width="16" height="5" rx="3" fill="#e0dfdb" transform="rotate(-25 440 215)"/>
<rect x="455" y="210" width="10" height="4" rx="3" fill="#e0dfdb" transform="rotate(-25 455 210)"/>
<rect x="310" y="270" width="10" height="10" rx="3" fill="#e0dfdb" transform="rotate(0 310 270)"/>
<path d="M400.0,102.0 L466.0,76.0 L522.0,76.0 L522.0,178.0 L470.0,175.0 L420.0,140.0Z" fill="#8f8c82" />
<path d="M418.0,99.0 L435.0,92.0 L446.0,128.0 L430.0,133.0Z" fill="#6e7fa3" />
<rect x="435" y="135" width="16" height="12" fill="#e4e3df" opacity="0.85" transform="rotate(-25 435 135)"/>
<rect x="455" y="140" width="10" height="18" fill="#e4e3df" opacity="0.85" transform="rotate(-25 455 140)"/>
<rect x="440" y="160" width="18" height="7" fill="#e4e3df" opacity="0.85" transform="rotate(-25 440 160)"/>
<rect x="470" y="150" width="8" height="22" fill="#e4e3df" opacity="0.85" transform="rotate(-25 470 150)"/>
<rect x="485" y="140" width="10" height="12" fill="#e4e3df" opacity="0.85" transform="rotate(-25 485 140)"/>
<rect x="480" y="110" width="20" height="12" fill="#e4e3df" opacity="0.85" transform="rotate(-25 480 110)"/>
<rect x="450" y="100" width="16" height="10" fill="#e4e3df" opacity="0.85" transform="rotate(-25 450 100)"/>
<path d="M481.5,84.0 L542.7,66.0 L621.7,0.0 L693.0,0.0 L693.0,102.0 L512.0,190.0 L500.0,150.0Z" fill="#b9b1a5" />
<path d="M552.9,68.8 L626.8,33.0 L653.5,84.0 L578.4,119.7Z" fill="#7d7a77" />
<path d="M562.1,64.3 L587.8,115.2" fill="none" stroke="#646260" stroke-width="1" opacity="0.6"/>
<path d="M571.4,59.8 L597.2,110.8" fill="none" stroke="#646260" stroke-width="1" opacity="0.6"/>
<path d="M580.6,55.4 L606.6,106.3" fill="none" stroke="#646260" stroke-width="1" opacity="0.6"/>
<path d="M589.8,50.9 L616.0,101.8" fill="none" stroke="#646260" stroke-width="1" opacity="0.6"/>
<path d="M599.1,46.4 L625.3,97.4" fill="none" stroke="#646260" stroke-width="1" opacity="0.6"/>
<path d="M608.3,42.0 L634.7,92.9" fill="none" stroke="#646260" stroke-width="1" opacity="0.6"/>
<path d="M617.6,37.5 L644.1,88.5" fill="none" stroke="#646260" stroke-width="1" opacity="0.6"/>
<path d="M512.0,56.0 L548.0,38.0 L555.4,58.6 L522.3,76.4Z" fill="#5e5e5f" />
<path d="M548.0,51.0 L598.7,25.5 L606.0,40.8 L553.0,63.7Z" fill="#576347" />
<path d="M466.0,76.0 L512.0,56.0 L522.0,76.0 L470.0,100.0Z" fill="#95918a" />
<path d="M512.0,190.0 L693.0,102.0 L800.0,55.0" fill="none" stroke="#3e4135" stroke-width="3" />
<rect x="660" y="2" width="12" height="8" fill="#efeeec" transform="rotate(-25 660 2)"/>
<path d="M693.0,0.0 L800.0,0.0 L800.0,23.0 L785.0,33.0 L693.0,81.5Z" fill="#515a46" />
<path d="M800.0,0.0 L800.0,23.0 L785.0,33.0" fill="none" stroke="#d7d4cb" stroke-width="2" />
<path d="M683.0,81.5 L787.5,35.7 L792.6,51.0 L683.0,102.0Z" fill="#bab3a7" />
<path d="M787.0,25.0 L826.0,25.0 L826.0,51.0 L792.6,51.0Z" fill="#726f64" />
<path d="M512.0,190.0 L693.0,102.0 L792.6,51.0 L826.0,51.0 L864.0,232.0 L700.0,250.0 L560.0,262.0 L420.0,300.0 L331.0,242.0 L415.0,237.0Z" fill="#666956" />
<path d="M415.0,237.0 L512.0,190.0" fill="none" stroke="#3e4135" stroke-width="3" />
<path d="M707.9,155.0 Q707.2,158.1 704.5,160.0 Q701.8,162.0 698.2,161.6 Q694.6,161.3 693.1,158.2 Q691.5,155.1 691.6,152.0 Q691.7,149.0 693.9,147.1 Q696.1,145.2 699.0,143.4 Q701.8,141.6 703.9,144.3 Q706.0,147.0 707.3,149.5 Q708.6,152.0 707.9,155.0Z" fill="#333e30" opacity="0.85"/>
<path d="M729.0,171.7 Q728.7,175.3 725.3,177.1 Q721.9,178.9 718.0,178.6 Q714.1,178.3 712.2,174.9 Q710.4,171.5 709.4,167.7 Q708.5,163.8 711.9,161.9 Q715.3,159.9 718.5,159.1 Q721.7,158.3 725.4,159.3 Q729.0,160.4 729.2,164.2 Q729.3,168.0 729.0,171.7Z" fill="#333e30" opacity="0.85"/>
<path d="M696.5,180.5 Q695.9,183.0 693.7,184.9 Q691.6,186.9 688.6,186.3 Q685.5,185.7 684.2,183.2 Q682.8,180.6 683.0,178.1 Q683.2,175.5 684.6,173.4 Q686.1,171.2 688.8,170.1 Q691.6,169.1 693.8,171.0 Q696.1,172.9 696.5,175.5 Q697.0,178.0 696.5,180.5Z" fill="#333e30" opacity="0.85"/>
<path d="M748.6,193.5 Q748.4,197.1 745.1,198.7 Q741.8,200.3 738.0,200.2 Q734.1,200.2 731.5,197.1 Q728.8,194.1 728.9,190.0 Q728.9,186.0 732.0,183.7 Q735.0,181.4 738.5,180.1 Q742.0,178.8 744.6,181.4 Q747.2,183.9 748.0,187.0 Q748.7,190.0 748.6,193.5Z" fill="#333e30" opacity="0.85"/>
<path d="M766.9,162.6 Q766.1,165.1 763.9,167.3 Q761.7,169.5 758.4,168.9 Q755.2,168.3 754.1,165.4 Q752.9,162.6 752.8,159.9 Q752.6,157.3 754.3,155.2 Q756.0,153.2 758.7,152.7 Q761.4,152.2 763.7,153.5 Q766.1,154.9 766.9,157.4 Q767.8,160.0 766.9,162.6Z" fill="#333e30" opacity="0.85"/>
<path d="M787.6,187.6 Q786.3,190.3 784.0,192.3 Q781.6,194.3 778.3,194.1 Q774.9,193.9 773.0,191.1 Q771.2,188.2 770.7,184.8 Q770.2,181.4 772.7,179.1 Q775.3,176.8 778.3,176.9 Q781.4,177.0 784.6,177.7 Q787.8,178.5 788.3,181.7 Q788.9,185.0 787.6,187.6Z" fill="#333e30" opacity="0.85"/>
<path d="M810.2,213.3 Q807.8,216.5 804.7,217.8 Q801.6,219.0 798.0,219.3 Q794.4,219.7 791.9,216.8 Q789.4,213.9 789.3,210.0 Q789.3,206.1 791.4,202.4 Q793.5,198.7 797.8,198.6 Q802.0,198.4 805.8,200.2 Q809.5,202.0 811.1,206.0 Q812.7,210.0 810.2,213.3Z" fill="#333e30" opacity="0.85"/>
<path d="M738.2,218.3 Q737.9,221.7 734.9,223.9 Q732.0,226.1 728.8,224.3 Q725.7,222.4 723.8,220.2 Q722.0,217.9 720.8,214.6 Q719.6,211.2 721.9,208.0 Q724.1,204.9 727.8,205.7 Q731.5,206.6 734.8,207.3 Q738.2,208.1 738.3,211.6 Q738.5,215.0 738.2,218.3Z" fill="#333e30" opacity="0.85"/>
<path d="M697.1,212.9 Q697.0,215.8 694.2,217.3 Q691.5,218.7 688.9,217.6 Q686.2,216.5 684.6,214.5 Q683.0,212.5 682.2,209.7 Q681.4,206.9 683.6,204.8 Q685.8,202.7 688.7,201.9 Q691.6,201.0 693.9,202.9 Q696.1,204.9 696.7,207.4 Q697.2,210.0 697.1,212.9Z" fill="#333e30" opacity="0.85"/>
<path d="M822.7,181.1 Q822.5,184.3 819.5,185.5 Q816.5,186.7 813.7,186.0 Q810.8,185.2 809.0,183.0 Q807.1,180.9 806.8,177.9 Q806.5,174.9 808.5,172.6 Q810.5,170.2 813.6,169.4 Q816.7,168.5 818.9,170.7 Q821.2,172.8 822.0,175.4 Q822.8,178.0 822.7,181.1Z" fill="#333e30" opacity="0.85"/>
<path d="M769.0,228.2 Q767.5,231.3 764.7,233.3 Q761.8,235.3 758.3,234.6 Q754.8,233.9 752.5,231.3 Q750.2,228.6 750.1,225.0 Q750.0,221.4 752.3,218.5 Q754.6,215.6 758.1,215.5 Q761.7,215.4 764.4,217.2 Q767.1,219.0 768.8,222.0 Q770.4,225.0 769.0,228.2Z" fill="#333e30" opacity="0.85"/>
<path d="M713.0,238.0 Q712.1,241.0 709.3,242.0 Q706.4,243.0 703.7,242.5 Q701.0,242.0 699.6,239.7 Q698.2,237.5 697.3,234.7 Q696.5,231.9 698.3,229.2 Q700.1,226.5 703.2,226.8 Q706.4,227.2 708.5,228.8 Q710.6,230.3 712.3,232.7 Q714.0,235.0 713.0,238.0Z" fill="#333e30" opacity="0.85"/>
<path d="M646.0,217.3 Q645.5,219.6 643.3,220.7 Q641.2,221.7 638.4,222.1 Q635.6,222.5 634.9,219.8 Q634.2,217.1 633.9,214.9 Q633.6,212.7 635.2,211.1 Q636.8,209.5 639.1,208.4 Q641.4,207.3 643.8,208.5 Q646.3,209.7 646.4,212.4 Q646.6,215.0 646.0,217.3Z" fill="#333e30" opacity="0.85"/>
<path d="M614.9,231.7 Q614.1,233.5 612.6,234.9 Q611.1,236.3 608.9,236.0 Q606.7,235.8 604.8,234.2 Q603.0,232.6 604.0,230.4 Q605.0,228.2 606.1,226.7 Q607.2,225.2 609.1,224.8 Q611.0,224.4 612.7,225.3 Q614.4,226.3 615.1,228.1 Q615.7,230.0 614.9,231.7Z" fill="#333e30" opacity="0.85"/>
<path d="M252.0,241.0 L331.0,242.0 L420.0,300.0 L560.0,262.0 L700.0,250.0 L864.0,232.0 L866.0,352.0 L693.0,406.0 L573.0,448.0 L468.0,482.0 L378.0,482.0 L283.0,345.0Z" fill="#676757" />
<path d="M300.0,330.0 L860.0,250.0" fill="none" stroke="#75745f" stroke-width="4" opacity="0.5"/>
<path d="M308.0,346.0 L860.0,264.0" fill="none" stroke="#5e5e4b" stroke-width="4" opacity="0.5"/>
<path d="M316.0,362.0 L860.0,278.0" fill="none" stroke="#75745f" stroke-width="4" opacity="0.5"/>
<path d="M324.0,378.0 L860.0,292.0" fill="none" stroke="#5e5e4b" stroke-width="4" opacity="0.5"/>
<path d="M332.0,394.0 L860.0,306.0" fill="none" stroke="#75745f" stroke-width="4" opacity="0.5"/>
<path d="M340.0,410.0 L860.0,320.0" fill="none" stroke="#5e5e4b" stroke-width="4" opacity="0.5"/>
<path d="M348.0,426.0 L860.0,334.0" fill="none" stroke="#75745f" stroke-width="4" opacity="0.5"/>
<path d="M356.0,442.0 L860.0,348.0" fill="none" stroke="#5e5e4b" stroke-width="4" opacity="0.5"/>
<path d="M364.0,458.0 L860.0,362.0" fill="none" stroke="#75745f" stroke-width="4" opacity="0.5"/>
<path d="M372.0,474.0 L860.0,376.0" fill="none" stroke="#5e5e4b" stroke-width="4" opacity="0.5"/>
<path d="M377.2,302.9 Q376.9,305.8 374.2,307.1 Q371.5,308.5 368.9,307.5 Q366.3,306.5 364.7,304.5 Q363.1,302.5 363.0,299.9 Q362.8,297.4 364.6,295.5 Q366.4,293.7 369.0,292.3 Q371.6,291.0 373.8,293.0 Q375.9,295.0 376.7,297.5 Q377.5,300.0 377.2,302.9Z" fill="#384434" opacity="0.85"/>
<path d="M406.9,292.7 Q406.3,295.3 403.8,296.3 Q401.3,297.2 399.0,296.5 Q396.6,295.8 394.3,294.4 Q392.0,292.9 392.0,290.0 Q392.0,287.1 394.2,285.5 Q396.5,284.0 398.9,283.3 Q401.3,282.6 404.0,283.5 Q406.6,284.4 407.1,287.2 Q407.5,290.0 406.9,292.7Z" fill="#384434" opacity="0.85"/>
<path d="M436.2,277.1 Q435.1,279.3 433.1,280.2 Q431.1,281.0 428.4,281.8 Q425.7,282.5 424.0,280.2 Q422.3,277.8 422.8,275.2 Q423.3,272.6 424.8,270.6 Q426.3,268.5 428.8,268.1 Q431.3,267.7 433.2,269.2 Q435.2,270.6 436.3,272.8 Q437.4,275.0 436.2,277.1Z" fill="#384434" opacity="0.85"/>
<path d="M468.3,262.8 Q466.8,265.7 464.0,266.5 Q461.3,267.4 459.0,266.6 Q456.6,265.9 454.4,264.3 Q452.3,262.8 452.4,260.1 Q452.6,257.3 454.0,254.6 Q455.4,252.0 458.5,251.6 Q461.6,251.1 464.1,252.8 Q466.6,254.4 468.3,257.2 Q469.9,260.0 468.3,262.8Z" fill="#384434" opacity="0.85"/>
<path d="M505.7,257.1 Q504.9,259.1 503.1,260.5 Q501.2,261.8 498.9,261.3 Q496.6,260.8 494.4,259.4 Q492.1,257.9 492.5,255.2 Q493.0,252.5 494.6,250.4 Q496.1,248.3 498.8,247.3 Q501.5,246.4 503.3,248.5 Q505.2,250.7 505.8,252.8 Q506.4,255.0 505.7,257.1Z" fill="#384434" opacity="0.85"/>
<path d="M546.2,252.1 Q544.9,254.1 543.2,256.1 Q541.4,258.0 539.2,256.6 Q537.0,255.2 534.6,254.0 Q532.2,252.8 532.2,250.0 Q532.1,247.1 534.0,245.0 Q535.8,242.8 538.5,243.3 Q541.1,243.9 543.1,244.8 Q545.2,245.7 546.3,247.8 Q547.5,250.0 546.2,252.1Z" fill="#384434" opacity="0.85"/>
<path d="M586.4,242.0 Q584.8,244.0 583.0,245.6 Q581.3,247.2 578.8,246.8 Q576.3,246.3 574.1,244.6 Q571.8,243.0 572.3,240.2 Q572.8,237.4 574.3,235.1 Q575.8,232.7 578.5,233.0 Q581.2,233.3 583.7,234.0 Q586.3,234.7 587.1,237.4 Q588.0,240.0 586.4,242.0Z" fill="#384434" opacity="0.85"/>
<path d="M337.7,323.1 Q337.4,326.2 334.3,326.6 Q331.2,326.9 328.3,327.5 Q325.3,328.1 324.2,325.3 Q323.0,322.5 322.5,319.8 Q322.0,317.1 323.9,314.9 Q325.8,312.7 328.5,312.8 Q331.3,312.9 334.2,313.4 Q337.2,314.0 337.6,317.0 Q338.1,320.0 337.7,323.1Z" fill="#384434" opacity="0.85"/>
<path d="M387.6,332.8 Q386.6,335.5 384.0,336.6 Q381.3,337.6 378.5,337.5 Q375.7,337.4 373.6,335.3 Q371.4,333.1 371.0,329.9 Q370.6,326.6 373.1,324.5 Q375.6,322.4 378.7,321.3 Q381.7,320.2 383.9,322.6 Q386.0,324.9 387.3,327.5 Q388.6,330.0 387.6,332.8Z" fill="#384434" opacity="0.85"/>
<path d="M428.7,333.2 Q427.7,336.4 424.9,339.1 Q422.1,341.8 418.2,340.9 Q414.3,339.9 412.1,336.8 Q409.9,333.7 411.0,330.4 Q412.2,327.2 413.7,324.4 Q415.1,321.6 418.5,320.4 Q421.9,319.2 424.5,321.6 Q427.0,324.1 428.4,327.1 Q429.8,330.0 428.7,333.2Z" fill="#384434" opacity="0.85"/>
<path d="M467.4,322.6 Q466.3,325.3 463.7,326.0 Q461.2,326.7 458.1,327.6 Q455.1,328.6 453.2,325.9 Q451.3,323.2 452.2,320.3 Q453.0,317.5 454.3,315.0 Q455.7,312.5 458.5,312.5 Q461.3,312.5 463.7,313.7 Q466.1,314.9 467.3,317.4 Q468.5,320.0 467.4,322.6Z" fill="#384434" opacity="0.85"/>
<path d="M513.0,302.7 Q511.5,305.5 509.0,307.0 Q506.5,308.5 503.5,308.1 Q500.6,307.7 498.2,305.5 Q495.8,303.4 496.4,300.2 Q497.1,297.1 499.0,295.0 Q500.9,292.9 503.8,291.5 Q506.7,290.1 509.2,292.3 Q511.6,294.4 513.0,297.2 Q514.4,300.0 513.0,302.7Z" fill="#384434" opacity="0.85"/>
<path d="M487.2,282.4 Q485.8,284.9 483.6,286.4 Q481.4,287.9 479.0,287.0 Q476.5,286.0 474.4,284.4 Q472.2,282.8 473.2,280.4 Q474.1,277.9 475.5,276.2 Q476.8,274.5 478.9,274.1 Q481.1,273.8 483.6,274.4 Q486.0,274.9 487.3,277.5 Q488.6,280.0 487.2,282.4Z" fill="#384434" opacity="0.85"/>
<path d="M358.1,362.6 Q356.2,365.2 353.9,367.0 Q351.5,368.8 348.2,368.9 Q344.8,369.0 342.9,366.2 Q341.0,363.3 341.8,360.3 Q342.7,357.3 344.3,355.1 Q345.9,352.8 348.6,352.4 Q351.4,352.1 353.7,353.5 Q356.1,354.9 358.0,357.4 Q360.0,360.0 358.1,362.6Z" fill="#384434" opacity="0.85"/>
<path d="M401.7,357.2 Q400.3,359.5 398.5,362.0 Q396.7,364.5 393.8,363.3 Q391.0,362.0 389.0,359.9 Q387.1,357.9 386.9,354.9 Q386.7,352.0 388.6,349.5 Q390.4,347.1 393.5,346.4 Q396.6,345.8 398.9,347.8 Q401.1,349.9 402.1,352.4 Q403.0,355.0 401.7,357.2Z" fill="#384434" opacity="0.85"/>
<path d="M446.2,367.3 Q445.5,369.6 443.3,370.3 Q441.0,371.0 438.7,371.1 Q436.4,371.2 434.5,369.4 Q432.5,367.7 432.1,364.9 Q431.8,362.0 433.8,359.9 Q435.9,357.9 438.6,357.6 Q441.4,357.3 443.6,358.7 Q445.9,360.0 446.4,362.5 Q446.9,365.0 446.2,367.3Z" fill="#384434" opacity="0.85"/>
<path d="M306.4,352.5 Q306.0,355.0 303.7,356.4 Q301.4,357.7 298.5,357.7 Q295.6,357.6 294.5,355.0 Q293.3,352.4 292.9,349.9 Q292.5,347.3 294.2,345.0 Q295.8,342.8 298.7,341.8 Q301.6,340.9 304.4,342.4 Q307.2,344.0 307.0,347.0 Q306.8,350.0 306.4,352.5Z" fill="#384434" opacity="0.85"/>
<path d="M326.3,387.1 Q324.9,389.1 323.2,391.1 Q321.4,393.0 318.6,392.7 Q315.7,392.4 314.3,390.0 Q312.9,387.6 313.2,385.1 Q313.4,382.6 314.9,380.6 Q316.3,378.6 318.7,378.6 Q321.1,378.7 323.6,379.3 Q326.1,379.9 326.9,382.4 Q327.7,385.0 326.3,387.1Z" fill="#384434" opacity="0.85"/>
<path d="M527.2,347.4 Q525.7,349.8 523.5,351.3 Q521.4,352.9 518.6,352.6 Q515.8,352.2 514.8,349.7 Q513.8,347.2 512.9,344.6 Q511.9,342.0 514.0,340.2 Q516.1,338.3 518.6,338.4 Q521.1,338.5 523.0,339.8 Q524.8,341.0 526.8,343.0 Q528.8,345.0 527.2,347.4Z" fill="#384434" opacity="0.85"/>
<path d="M567.0,332.8 Q566.6,335.5 564.1,337.2 Q561.6,338.8 558.8,337.8 Q556.1,336.7 553.5,335.0 Q550.9,333.3 551.7,330.3 Q552.6,327.3 554.2,325.1 Q555.9,322.9 558.6,322.9 Q561.2,323.0 564.4,323.3 Q567.5,323.7 567.5,326.8 Q567.5,330.0 567.0,332.8Z" fill="#384434" opacity="0.85"/>
<path d="M606.5,322.7 Q606.5,325.5 603.9,326.4 Q601.3,327.4 598.8,327.0 Q596.2,326.6 594.6,324.6 Q592.9,322.6 593.3,320.1 Q593.7,317.7 594.7,315.1 Q595.7,312.6 598.6,312.0 Q601.5,311.4 603.9,313.0 Q606.3,314.7 606.4,317.3 Q606.4,320.0 606.5,322.7Z" fill="#384434" opacity="0.85"/>
<path d="M647.1,302.3 Q645.5,304.6 643.5,306.9 Q641.6,309.2 638.9,307.9 Q636.2,306.6 633.6,305.0 Q631.0,303.3 632.0,300.4 Q632.9,297.4 634.3,295.0 Q635.7,292.6 638.7,291.7 Q641.6,290.8 643.6,293.0 Q645.6,295.3 647.1,297.6 Q648.6,300.0 647.1,302.3Z" fill="#384434" opacity="0.85"/>
<path d="M657.7,272.5 Q655.9,275.0 653.6,276.2 Q651.3,277.5 648.6,277.3 Q645.9,277.0 642.8,275.4 Q639.7,273.7 639.8,270.0 Q639.9,266.3 642.5,263.9 Q645.1,261.5 648.3,261.5 Q651.5,261.6 654.5,262.6 Q657.5,263.7 658.5,266.8 Q659.4,270.0 657.7,272.5Z" fill="#384434" opacity="0.85"/>
<path d="M626.7,252.3 Q625.4,254.5 623.4,256.0 Q621.3,257.5 618.6,257.3 Q615.9,257.1 615.1,254.6 Q614.3,252.1 614.1,249.9 Q613.8,247.8 615.1,245.7 Q616.3,243.7 618.7,243.7 Q621.1,243.7 623.3,244.6 Q625.4,245.4 626.7,247.7 Q628.1,250.0 626.7,252.3Z" fill="#384434" opacity="0.85"/>
<path d="M350.9,282.3 Q350.5,284.6 348.3,285.5 Q346.1,286.4 343.7,286.4 Q341.3,286.3 340.0,284.3 Q338.7,282.3 338.3,279.9 Q337.9,277.4 340.0,276.2 Q342.1,274.9 344.2,273.7 Q346.3,272.5 348.0,274.3 Q349.7,276.0 350.5,278.0 Q351.3,280.0 350.9,282.3Z" fill="#384434" opacity="0.8"/>
<path d="M379.4,270.6 Q378.2,273.2 375.8,274.5 Q373.4,275.8 370.5,275.6 Q367.7,275.4 365.7,273.2 Q363.7,271.0 363.6,268.0 Q363.5,264.9 365.5,262.6 Q367.5,260.2 370.5,260.1 Q373.4,260.0 376.4,260.8 Q379.5,261.7 380.0,264.9 Q380.5,268.0 379.4,270.6Z" fill="#384434" opacity="0.8"/>
<path d="M417.4,312.4 Q415.8,314.9 413.6,316.2 Q411.3,317.6 408.6,317.3 Q406.0,317.0 403.7,315.0 Q401.5,313.1 402.0,310.2 Q402.5,307.3 404.3,305.2 Q406.0,303.1 408.7,302.8 Q411.3,302.4 414.1,303.3 Q417.0,304.2 417.9,307.1 Q418.9,310.0 417.4,312.4Z" fill="#384434" opacity="0.8"/>
<path d="M460.4,302.2 Q460.4,304.5 458.3,305.9 Q456.3,307.3 453.9,306.7 Q451.5,306.1 450.1,304.2 Q448.7,302.3 448.5,299.9 Q448.4,297.6 450.2,296.2 Q452.0,294.8 454.1,294.1 Q456.2,293.4 457.6,295.0 Q459.1,296.5 459.7,298.3 Q460.4,300.0 460.4,302.2Z" fill="#384434" opacity="0.8"/>
<path d="M497.1,319.9 Q496.5,321.8 494.8,322.7 Q493.0,323.6 491.3,322.9 Q489.6,322.2 487.8,321.2 Q486.1,320.2 486.2,318.1 Q486.4,316.0 487.9,314.7 Q489.3,313.4 491.1,313.0 Q492.9,312.6 494.6,313.5 Q496.3,314.4 497.1,316.2 Q497.8,318.0 497.1,319.9Z" fill="#384434" opacity="0.8"/>
<path d="M520.3,282.3 Q520.5,284.6 518.4,285.9 Q516.3,287.2 514.0,286.4 Q511.7,285.7 510.0,284.1 Q508.4,282.4 508.9,280.2 Q509.3,277.9 510.4,276.0 Q511.5,274.0 513.8,274.3 Q516.0,274.5 518.1,275.1 Q520.2,275.6 520.2,277.8 Q520.2,280.0 520.3,282.3Z" fill="#384434" opacity="0.8"/>
<path d="M551.4,296.9 Q549.6,298.9 548.0,300.8 Q546.4,302.8 544.2,301.5 Q541.9,300.3 540.1,298.9 Q538.2,297.5 537.7,294.8 Q537.2,292.1 539.6,291.1 Q542.1,290.0 544.1,289.3 Q546.1,288.7 548.1,289.7 Q550.0,290.8 551.6,292.9 Q553.2,295.0 551.4,296.9Z" fill="#384434" opacity="0.8"/>
<path d="M580.5,287.4 Q580.7,289.8 578.5,290.9 Q576.3,292.1 574.1,291.2 Q571.9,290.4 570.6,288.7 Q569.3,287.1 569.0,284.9 Q568.7,282.7 570.5,281.5 Q572.3,280.4 574.1,280.1 Q575.9,279.8 578.3,280.0 Q580.7,280.2 580.5,282.6 Q580.4,285.0 580.5,287.4Z" fill="#384434" opacity="0.8"/>
<path d="M616.1,287.4 Q615.7,289.8 613.5,291.1 Q611.3,292.4 609.1,291.5 Q606.8,290.5 605.7,288.7 Q604.7,286.9 604.5,285.0 Q604.4,283.0 605.4,280.8 Q606.3,278.6 608.8,278.2 Q611.3,277.7 612.8,279.6 Q614.3,281.4 615.4,283.2 Q616.4,285.0 616.1,287.4Z" fill="#384434" opacity="0.8"/>
<path d="M476.7,397.5 Q476.0,400.0 473.6,400.9 Q471.2,401.8 468.3,402.3 Q465.5,402.8 463.4,400.5 Q461.2,398.2 462.3,395.4 Q463.4,392.6 464.6,390.2 Q465.9,387.8 468.5,388.0 Q471.2,388.1 474.1,388.7 Q476.9,389.2 477.2,392.1 Q477.4,395.0 476.7,397.5Z" fill="#384434" opacity="0.8"/>
<path d="M504.8,382.0 Q504.7,384.0 502.8,384.6 Q500.9,385.2 498.8,385.4 Q496.7,385.7 495.3,383.9 Q493.9,382.2 494.1,380.1 Q494.2,377.9 495.9,376.8 Q497.5,375.8 499.3,374.9 Q501.1,374.0 503.1,374.9 Q505.1,375.7 505.0,377.9 Q504.8,380.0 504.8,382.0Z" fill="#384434" opacity="0.8"/>
<path d="M545.2,372.0 Q544.7,373.9 542.9,375.0 Q541.1,376.2 538.7,376.3 Q536.3,376.3 535.3,374.2 Q534.4,372.1 534.4,370.0 Q534.4,368.0 535.7,366.3 Q536.9,364.7 539.1,363.8 Q541.3,362.9 543.5,364.0 Q545.8,365.2 545.7,367.6 Q545.7,370.0 545.2,372.0Z" fill="#384434" opacity="0.8"/>
<path d="M596.4,362.4 Q595.8,364.8 593.5,365.8 Q591.2,366.7 589.1,365.9 Q587.0,365.1 585.7,363.6 Q584.3,362.1 583.5,359.7 Q582.8,357.4 584.7,355.7 Q586.5,353.9 588.8,354.0 Q591.0,354.1 593.2,354.8 Q595.3,355.5 596.1,357.8 Q597.0,360.0 596.4,362.4Z" fill="#384434" opacity="0.8"/>
<path d="M625.6,381.8 Q624.3,383.6 622.7,384.7 Q621.0,385.8 619.0,385.4 Q617.1,385.1 616.3,383.4 Q615.5,381.6 614.9,379.8 Q614.3,377.9 615.8,376.7 Q617.3,375.4 619.1,375.1 Q620.9,374.8 622.9,375.3 Q625.0,375.8 625.9,377.9 Q626.9,380.0 625.6,381.8Z" fill="#384434" opacity="0.8"/>
<path d="M655.1,347.0 Q654.9,349.1 652.9,349.6 Q650.9,350.2 649.1,349.9 Q647.3,349.6 645.9,348.3 Q644.5,347.0 644.8,345.1 Q645.2,343.3 645.9,341.2 Q646.7,339.2 648.9,338.7 Q651.2,338.2 652.4,340.1 Q653.7,341.9 654.5,343.5 Q655.3,345.0 655.1,347.0Z" fill="#384434" opacity="0.8"/>
<path d="M686.2,322.1 Q685.0,324.2 683.2,326.0 Q681.4,327.8 679.0,326.9 Q676.6,325.9 675.5,324.0 Q674.4,322.1 673.9,319.8 Q673.4,317.6 674.9,315.7 Q676.4,313.8 678.8,313.7 Q681.1,313.6 683.3,314.5 Q685.5,315.3 686.5,317.7 Q687.5,320.0 686.2,322.1Z" fill="#384434" opacity="0.8"/>
<path d="M461.9,422.5 Q460.9,425.0 458.7,426.8 Q456.5,428.6 453.7,427.9 Q450.9,427.2 449.3,424.9 Q447.7,422.7 447.1,419.8 Q446.5,416.9 449.1,415.5 Q451.6,414.1 454.0,412.9 Q456.5,411.6 458.3,413.6 Q460.2,415.7 461.5,417.8 Q462.8,420.0 461.9,422.5Z" fill="#384434" opacity="0.8"/>
<path d="M506.0,422.3 Q505.4,424.5 503.4,426.2 Q501.4,427.9 498.7,427.4 Q496.0,426.9 494.2,424.8 Q492.4,422.7 493.2,420.3 Q493.9,417.8 495.1,415.8 Q496.4,413.8 498.8,413.7 Q501.1,413.6 503.4,414.4 Q505.7,415.2 506.1,417.6 Q506.5,420.0 506.0,422.3Z" fill="#384434" opacity="0.8"/>
<path d="M435.6,442.3 Q435.5,444.6 433.4,446.0 Q431.3,447.4 428.9,446.8 Q426.4,446.2 424.5,444.4 Q422.6,442.7 423.4,440.3 Q424.3,437.9 425.6,436.4 Q427.0,434.8 429.0,434.6 Q431.0,434.4 433.1,435.0 Q435.3,435.5 435.5,437.8 Q435.7,440.0 435.6,442.3Z" fill="#384434" opacity="0.8"/>
<path d="M565.7,402.0 Q564.7,404.0 563.0,405.7 Q561.3,407.4 559.2,406.2 Q557.2,404.9 554.9,403.8 Q552.7,402.7 553.1,400.1 Q553.5,397.6 555.0,395.8 Q556.6,394.1 558.9,393.3 Q561.3,392.6 563.0,394.4 Q564.7,396.1 565.6,398.0 Q566.6,400.0 565.7,402.0Z" fill="#384434" opacity="0.8"/>
<path d="M614.7,396.6 Q613.8,398.2 612.4,399.3 Q611.0,400.5 608.9,400.4 Q606.9,400.4 605.6,398.7 Q604.3,397.1 604.6,395.1 Q604.9,393.1 605.9,391.4 Q606.9,389.7 608.9,389.9 Q610.9,390.0 613.0,390.4 Q615.1,390.7 615.3,392.9 Q615.5,395.0 614.7,396.6Z" fill="#384434" opacity="0.8"/>
<path d="M452.7,379.2 Q450.8,385.4 445.0,388.3 Q439.2,391.3 431.9,392.0 Q424.6,392.8 419.0,387.0 Q413.5,381.2 413.7,373.1 Q413.8,364.9 420.5,361.3 Q427.1,357.6 433.3,355.2 Q439.6,352.8 445.5,356.4 Q451.5,360.0 453.0,366.5 Q454.6,373.0 452.7,379.2Z" fill="#334030" opacity="0.9"/>
<path d="M407.4,440.4 Q407.5,447.7 400.2,448.3 Q392.8,448.8 386.6,449.3 Q380.3,449.8 375.1,445.0 Q369.9,440.3 369.2,432.7 Q368.4,425.1 375.0,421.8 Q381.6,418.4 387.5,416.3 Q393.3,414.2 399.8,416.8 Q406.3,419.4 406.8,426.2 Q407.3,433.0 407.4,440.4Z" fill="#384634" opacity="0.9"/>
<path d="M552.6,340.5 Q550.9,348.0 544.5,355.1 Q538.2,362.3 530.0,357.3 Q521.8,352.4 515.7,346.9 Q509.6,341.5 510.1,333.2 Q510.5,324.8 515.5,318.0 Q520.4,311.2 528.6,311.4 Q536.8,311.6 543.1,315.4 Q549.3,319.3 551.9,326.1 Q554.4,333.0 552.6,340.5Z" fill="#4d5d3f" opacity="0.85"/>
<path d="M620.8,341.5 Q617.6,348.1 611.5,351.5 Q605.5,354.8 599.6,352.1 Q593.7,349.4 590.0,345.1 Q586.2,340.7 585.3,334.6 Q584.3,328.5 589.0,324.5 Q593.7,320.5 599.4,318.8 Q605.2,317.0 611.8,319.1 Q618.5,321.2 621.2,328.1 Q624.0,335.0 620.8,341.5Z" fill="#323d2f" opacity="0.9"/>
<path d="M638.0,415.1 Q637.1,417.8 634.6,419.0 Q632.1,420.2 629.1,420.2 Q626.2,420.2 624.8,417.7 Q623.4,415.1 623.5,412.5 Q623.6,409.9 625.3,407.9 Q626.9,405.9 629.5,405.4 Q632.0,404.9 635.1,405.6 Q638.1,406.2 638.5,409.3 Q638.8,412.4 638.0,415.1Z" fill="#303c2e" opacity="0.9"/>
<path d="M643.5,377.5 Q642.6,381.0 639.3,382.4 Q636.1,383.8 632.3,384.1 Q628.4,384.4 625.7,381.3 Q623.0,378.2 624.7,374.7 Q626.4,371.2 627.6,367.8 Q628.9,364.5 632.4,365.0 Q635.9,365.5 638.4,367.1 Q640.9,368.6 642.6,371.4 Q644.3,374.1 643.5,377.5Z" fill="#303c2e" opacity="0.9"/>
<path d="M652.5,398.2 Q651.7,401.5 648.5,402.7 Q645.3,403.8 641.7,404.2 Q638.1,404.6 635.8,401.6 Q633.4,398.6 633.6,394.9 Q633.8,391.2 636.2,388.6 Q638.6,385.9 642.2,384.3 Q645.9,382.7 649.6,384.7 Q653.3,386.8 653.3,390.8 Q653.2,394.8 652.5,398.2Z" fill="#303c2e" opacity="0.9"/>
<path d="M643.7,343.6 Q642.0,346.5 639.4,347.9 Q636.7,349.3 633.5,349.3 Q630.3,349.4 628.7,346.6 Q627.2,343.7 627.7,341.0 Q628.3,338.3 629.5,335.6 Q630.7,333.0 633.8,332.2 Q636.9,331.5 639.6,333.2 Q642.4,334.8 643.9,337.8 Q645.4,340.8 643.7,343.6Z" fill="#303c2e" opacity="0.9"/>
<path d="M656.9,362.3 Q654.5,365.7 651.6,368.3 Q648.6,370.8 644.6,369.9 Q640.7,369.0 639.2,365.6 Q637.7,362.2 638.0,359.0 Q638.2,355.9 640.0,353.4 Q641.8,350.8 645.0,350.4 Q648.1,349.9 650.8,351.5 Q653.4,353.2 656.3,356.0 Q659.2,358.9 656.9,362.3Z" fill="#303c2e" opacity="0.9"/>
<path d="M666.4,379.0 Q664.7,381.4 662.5,383.0 Q660.4,384.6 657.0,385.3 Q653.5,385.9 652.7,382.5 Q651.9,379.1 651.1,376.3 Q650.2,373.4 652.0,370.5 Q653.8,367.7 657.3,367.1 Q660.7,366.5 663.7,368.3 Q666.6,370.1 667.4,373.3 Q668.2,376.6 666.4,379.0Z" fill="#303c2e" opacity="0.9"/>
<path d="M681.9,399.2 Q680.8,403.2 676.8,403.6 Q672.8,404.0 668.9,405.0 Q665.0,405.9 663.3,402.3 Q661.6,398.6 661.0,394.9 Q660.4,391.2 663.4,389.0 Q666.4,386.8 669.9,384.9 Q673.3,383.1 675.6,386.3 Q677.9,389.5 680.4,392.3 Q682.9,395.1 681.9,399.2Z" fill="#303c2e" opacity="0.9"/>
<path d="M634.7,285.8 Q632.3,288.6 629.9,291.3 Q627.6,294.0 624.3,292.5 Q621.0,290.9 618.3,288.8 Q615.5,286.7 616.6,283.4 Q617.8,280.1 618.8,276.5 Q619.8,272.9 623.5,273.2 Q627.3,273.6 630.9,274.6 Q634.4,275.6 635.8,279.3 Q637.1,283.0 634.7,285.8Z" fill="#303c2e" opacity="0.9"/>
<path d="M645.1,304.7 Q644.2,307.7 641.5,310.1 Q638.9,312.5 634.9,312.3 Q631.0,312.1 629.5,308.6 Q628.0,305.0 628.2,301.8 Q628.5,298.6 630.3,295.9 Q632.1,293.3 635.6,291.5 Q639.1,289.7 641.5,292.8 Q643.8,296.0 644.9,298.8 Q646.0,301.7 645.1,304.7Z" fill="#303c2e" opacity="0.9"/>
<path d="M659.3,323.3 Q658.8,326.7 655.8,329.1 Q652.8,331.4 648.9,330.6 Q645.0,329.9 642.9,326.7 Q640.8,323.6 641.0,320.0 Q641.2,316.5 643.4,313.7 Q645.6,311.0 648.9,311.2 Q652.2,311.4 655.9,312.0 Q659.5,312.6 659.6,316.3 Q659.7,320.0 659.3,323.3Z" fill="#303c2e" opacity="0.9"/>
<path d="M671.7,341.7 Q670.5,344.9 667.6,346.2 Q664.6,347.6 661.2,347.7 Q657.8,347.8 655.5,345.0 Q653.2,342.2 653.3,338.7 Q653.4,335.1 656.2,333.2 Q658.9,331.4 661.9,329.7 Q664.9,328.1 667.8,330.2 Q670.7,332.2 671.8,335.4 Q672.9,338.6 671.7,341.7Z" fill="#303c2e" opacity="0.9"/>
<path d="M683.6,361.0 Q683.0,364.5 680.0,367.4 Q677.0,370.3 672.9,369.1 Q668.8,367.9 667.0,364.4 Q665.2,361.0 664.4,357.3 Q663.6,353.5 666.0,349.9 Q668.3,346.4 672.5,346.8 Q676.6,347.2 680.4,348.4 Q684.3,349.6 684.3,353.6 Q684.2,357.6 683.6,361.0Z" fill="#303c2e" opacity="0.9"/>
<path d="M693.6,381.0 Q693.4,384.5 690.1,386.1 Q686.8,387.6 683.1,387.4 Q679.4,387.3 677.1,384.3 Q674.8,381.2 674.8,377.5 Q674.9,373.8 677.5,371.5 Q680.1,369.1 683.6,367.6 Q687.0,366.2 689.1,369.2 Q691.2,372.3 692.5,374.9 Q693.7,377.5 693.6,381.0Z" fill="#303c2e" opacity="0.9"/>
<path d="M708.5,397.6 Q706.9,400.5 704.3,402.1 Q701.7,403.8 698.3,403.7 Q694.9,403.7 693.8,400.6 Q692.6,397.5 692.4,394.7 Q692.3,391.9 693.8,389.2 Q695.3,386.5 698.4,386.9 Q701.4,387.3 704.3,388.1 Q707.1,388.8 708.6,391.8 Q710.1,394.8 708.5,397.6Z" fill="#303c2e" opacity="0.9"/>
<path d="M635.6,252.2 Q634.9,255.4 631.8,256.9 Q628.8,258.4 626.0,257.1 Q623.1,255.7 620.7,253.9 Q618.2,252.1 618.6,249.0 Q618.9,245.9 621.2,244.3 Q623.5,242.6 626.0,241.6 Q628.5,240.7 631.0,242.1 Q633.4,243.6 634.9,246.3 Q636.4,248.9 635.6,252.2Z" fill="#303c2e" opacity="0.9"/>
<path d="M650.2,267.3 Q648.2,270.1 645.5,271.5 Q642.9,272.9 639.5,273.3 Q636.1,273.7 634.1,270.8 Q632.1,267.8 632.7,264.7 Q633.3,261.5 635.2,259.3 Q637.1,257.0 640.3,255.0 Q643.4,253.0 646.4,255.4 Q649.4,257.7 650.8,261.1 Q652.2,264.4 650.2,267.3Z" fill="#303c2e" opacity="0.9"/>
<path d="M663.0,286.4 Q661.7,290.2 658.0,291.5 Q654.3,292.8 650.8,292.1 Q647.3,291.4 644.8,288.8 Q642.4,286.1 642.9,282.7 Q643.4,279.2 645.0,275.8 Q646.6,272.4 650.5,272.1 Q654.3,271.9 658.1,273.2 Q662.0,274.5 663.1,278.5 Q664.3,282.5 663.0,286.4Z" fill="#303c2e" opacity="0.9"/>
<path d="M673.9,304.8 Q671.8,307.8 669.2,310.0 Q666.6,312.2 663.5,310.8 Q660.4,309.5 657.8,307.4 Q655.3,305.3 655.8,302.1 Q656.3,298.8 657.8,295.6 Q659.2,292.3 662.7,292.7 Q666.3,293.1 669.7,293.9 Q673.2,294.8 674.6,298.4 Q676.1,301.9 673.9,304.8Z" fill="#303c2e" opacity="0.9"/>
<path d="M687.7,324.1 Q687.0,327.9 683.5,329.7 Q679.9,331.4 676.2,330.5 Q672.6,329.5 670.9,326.5 Q669.3,323.4 668.7,320.0 Q668.0,316.6 670.4,314.1 Q672.9,311.6 676.3,310.7 Q679.8,309.7 683.7,310.9 Q687.7,312.0 688.0,316.1 Q688.4,320.3 687.7,324.1Z" fill="#303c2e" opacity="0.9"/>
<path d="M696.8,342.8 Q696.0,345.9 693.0,347.1 Q690.0,348.2 686.3,349.0 Q682.6,349.7 681.2,346.2 Q679.8,342.7 679.5,339.5 Q679.2,336.2 681.4,333.8 Q683.7,331.3 687.1,329.8 Q690.5,328.3 693.9,330.3 Q697.3,332.2 697.5,335.9 Q697.7,339.6 696.8,342.8Z" fill="#303c2e" opacity="0.9"/>
<path d="M709.5,359.7 Q707.3,362.0 705.3,363.7 Q703.2,365.4 700.4,364.9 Q697.7,364.5 695.3,362.5 Q693.0,360.6 693.1,357.4 Q693.2,354.2 695.4,352.3 Q697.7,350.4 700.6,349.0 Q703.5,347.6 706.5,349.3 Q709.5,350.9 710.6,354.1 Q711.7,357.4 709.5,359.7Z" fill="#303c2e" opacity="0.9"/>
<path d="M719.8,379.1 Q718.9,382.2 716.0,383.5 Q713.1,384.9 709.8,384.9 Q706.5,385.0 704.3,382.2 Q702.2,379.5 701.6,375.9 Q700.9,372.2 703.4,369.2 Q705.9,366.2 709.7,365.5 Q713.6,364.8 716.1,367.5 Q718.7,370.1 719.7,373.1 Q720.7,376.1 719.8,379.1Z" fill="#303c2e" opacity="0.9"/>
<path d="M651.6,232.0 Q650.0,234.2 648.2,236.8 Q646.3,239.4 642.9,238.9 Q639.6,238.5 637.4,235.8 Q635.3,233.1 636.6,230.2 Q638.0,227.3 639.2,224.9 Q640.5,222.6 643.3,221.8 Q646.1,221.1 648.7,222.6 Q651.3,224.1 652.3,226.9 Q653.2,229.7 651.6,232.0Z" fill="#303c2e" opacity="0.9"/>
<path d="M661.8,250.6 Q660.3,253.2 658.1,255.3 Q655.9,257.4 653.1,256.2 Q650.3,254.9 648.6,252.9 Q647.0,250.8 646.3,247.9 Q645.6,245.0 647.8,242.9 Q650.0,240.8 653.0,239.5 Q656.0,238.1 658.3,240.5 Q660.6,242.8 662.0,245.5 Q663.4,248.1 661.8,250.6Z" fill="#303c2e" opacity="0.9"/>
<path d="M675.4,266.5 Q674.5,269.4 671.8,270.8 Q669.1,272.2 665.8,272.3 Q662.5,272.3 661.5,269.2 Q660.4,266.1 659.2,263.1 Q658.1,260.1 660.9,258.5 Q663.7,256.8 666.5,255.0 Q669.4,253.2 671.9,255.5 Q674.5,257.8 675.4,260.7 Q676.3,263.5 675.4,266.5Z" fill="#303c2e" opacity="0.9"/>
<path d="M689.9,287.5 Q687.6,290.8 684.4,291.8 Q681.1,292.8 678.1,292.5 Q675.0,292.2 671.7,290.2 Q668.3,288.3 668.5,284.2 Q668.7,280.2 671.2,277.1 Q673.8,274.1 677.5,274.5 Q681.2,275.0 684.6,276.1 Q687.9,277.2 690.1,280.7 Q692.2,284.1 689.9,287.5Z" fill="#303c2e" opacity="0.9"/>
<path d="M699.3,303.6 Q697.6,306.7 694.8,308.7 Q692.0,310.7 689.2,308.9 Q686.4,307.1 684.2,305.3 Q681.9,303.5 682.4,300.7 Q683.0,297.9 684.5,295.6 Q686.0,293.3 688.8,293.1 Q691.6,292.8 695.0,293.3 Q698.3,293.7 699.7,297.1 Q701.0,300.5 699.3,303.6Z" fill="#303c2e" opacity="0.9"/>
<path d="M713.9,324.2 Q712.6,328.0 709.0,329.3 Q705.3,330.6 701.9,329.9 Q698.4,329.2 695.5,326.8 Q692.5,324.4 693.4,320.7 Q694.4,317.1 696.6,314.7 Q698.8,312.3 702.1,310.9 Q705.4,309.5 708.0,312.0 Q710.6,314.5 712.9,317.4 Q715.1,320.4 713.9,324.2Z" fill="#303c2e" opacity="0.9"/>
<path d="M723.9,341.5 Q723.0,344.6 720.2,346.2 Q717.4,347.9 714.6,346.7 Q711.8,345.5 708.7,343.9 Q705.6,342.2 706.9,339.0 Q708.2,335.8 709.6,332.9 Q710.9,330.1 714.2,329.5 Q717.5,328.9 720.2,330.7 Q722.9,332.6 723.9,335.5 Q724.9,338.5 723.9,341.5Z" fill="#303c2e" opacity="0.9"/>
<path d="M735.2,358.6 Q734.4,361.6 731.6,362.7 Q728.7,363.9 725.5,364.1 Q722.2,364.4 720.4,361.6 Q718.5,358.8 719.3,355.9 Q720.1,353.0 721.5,350.4 Q722.8,347.8 726.0,346.2 Q729.2,344.7 731.2,347.7 Q733.1,350.7 734.6,353.1 Q736.0,355.6 735.2,358.6Z" fill="#303c2e" opacity="0.9"/>
<path d="M749.1,380.2 Q747.7,383.1 745.0,384.5 Q742.4,385.9 739.2,385.9 Q736.0,385.8 733.9,383.3 Q731.8,380.7 732.3,377.6 Q732.7,374.4 734.5,371.9 Q736.2,369.3 739.4,368.7 Q742.5,368.1 745.6,369.5 Q748.7,370.8 749.6,374.1 Q750.6,377.4 749.1,380.2Z" fill="#303c2e" opacity="0.9"/>
<path d="M666.5,214.1 Q664.7,217.4 661.5,218.0 Q658.2,218.7 654.6,219.7 Q651.1,220.7 648.8,217.5 Q646.6,214.4 646.9,210.8 Q647.2,207.2 650.0,205.5 Q652.8,203.8 655.7,202.0 Q658.7,200.1 661.4,202.4 Q664.1,204.6 666.2,207.6 Q668.2,210.7 666.5,214.1Z" fill="#303c2e" opacity="0.9"/>
<path d="M680.6,234.4 Q680.6,238.3 676.9,239.6 Q673.3,241.0 669.4,240.9 Q665.5,240.8 663.6,237.5 Q661.7,234.1 661.5,230.5 Q661.4,226.9 663.8,224.1 Q666.1,221.3 669.6,221.4 Q673.0,221.4 676.1,222.7 Q679.2,224.0 679.9,227.3 Q680.5,230.5 680.6,234.4Z" fill="#303c2e" opacity="0.9"/>
<path d="M692.1,248.2 Q690.8,251.2 688.0,252.5 Q685.3,253.9 682.7,252.8 Q680.0,251.6 678.4,249.7 Q676.8,247.8 676.5,245.1 Q676.2,242.5 677.4,239.5 Q678.7,236.5 682.0,236.5 Q685.3,236.5 688.3,237.7 Q691.4,238.8 692.4,242.0 Q693.5,245.2 692.1,248.2Z" fill="#303c2e" opacity="0.9"/>
<path d="M702.5,267.7 Q700.2,270.4 697.9,273.2 Q695.7,276.0 692.3,274.7 Q688.9,273.4 687.5,270.6 Q686.2,267.8 685.5,264.7 Q684.8,261.7 686.9,259.3 Q689.1,256.9 692.3,255.8 Q695.6,254.7 699.0,256.2 Q702.5,257.7 703.6,261.3 Q704.8,265.0 702.5,267.7Z" fill="#303c2e" opacity="0.9"/>
<path d="M715.2,287.0 Q713.1,289.6 710.9,292.1 Q708.8,294.6 705.8,293.1 Q702.9,291.6 700.4,289.7 Q697.9,287.8 698.5,284.7 Q699.1,281.6 700.8,279.2 Q702.5,276.8 705.5,276.6 Q708.4,276.4 711.1,277.6 Q713.8,278.8 715.6,281.6 Q717.4,284.5 715.2,287.0Z" fill="#303c2e" opacity="0.9"/>
<path d="M728.4,305.6 Q727.6,309.0 724.3,309.9 Q721.0,310.9 717.8,310.7 Q714.6,310.6 712.7,307.9 Q710.7,305.3 709.9,301.8 Q709.0,298.3 712.0,296.4 Q715.1,294.5 718.1,293.4 Q721.2,292.2 723.6,294.5 Q725.9,296.7 727.5,299.4 Q729.1,302.1 728.4,305.6Z" fill="#303c2e" opacity="0.9"/>
<path d="M737.9,324.0 Q736.6,326.7 734.4,329.5 Q732.2,332.3 728.8,330.9 Q725.5,329.6 722.8,327.3 Q720.2,325.0 720.7,321.5 Q721.2,318.1 723.1,315.2 Q725.1,312.4 728.5,311.9 Q732.0,311.4 735.6,312.6 Q739.2,313.8 739.2,317.6 Q739.3,321.4 737.9,324.0Z" fill="#303c2e" opacity="0.9"/>
<path d="M753.3,342.0 Q753.1,345.4 749.7,346.1 Q746.4,346.7 743.4,346.6 Q740.5,346.4 737.6,344.4 Q734.7,342.4 736.0,339.1 Q737.4,335.9 738.6,332.8 Q739.7,329.6 743.2,329.2 Q746.7,328.9 749.6,330.6 Q752.5,332.3 753.1,335.5 Q753.6,338.6 753.3,342.0Z" fill="#303c2e" opacity="0.9"/>
<path d="M765.4,359.7 Q764.1,363.6 760.2,364.3 Q756.3,364.9 752.5,365.6 Q748.7,366.3 747.1,362.7 Q745.5,359.1 745.6,355.8 Q745.6,352.5 747.4,349.3 Q749.2,346.2 752.9,345.4 Q756.7,344.5 759.3,347.1 Q761.9,349.8 764.4,352.8 Q766.8,355.8 765.4,359.7Z" fill="#303c2e" opacity="0.9"/>
<path d="M681.1,194.3 Q680.5,197.7 677.3,198.2 Q674.0,198.8 670.7,199.4 Q667.4,199.9 665.2,197.2 Q662.9,194.5 663.3,191.1 Q663.7,187.8 665.8,185.4 Q668.0,183.0 671.1,182.1 Q674.3,181.2 677.0,183.2 Q679.6,185.1 680.7,188.0 Q681.7,191.0 681.1,194.3Z" fill="#303c2e" opacity="0.9"/>
<path d="M694.3,214.7 Q692.9,217.5 690.6,220.7 Q688.4,223.9 684.8,222.2 Q681.3,220.5 678.3,218.2 Q675.3,215.9 676.4,212.3 Q677.4,208.7 679.2,205.8 Q681.1,203.0 684.5,202.5 Q688.0,202.1 691.5,203.3 Q695.0,204.6 695.4,208.2 Q695.8,211.9 694.3,214.7Z" fill="#303c2e" opacity="0.9"/>
<path d="M707.5,231.5 Q706.3,234.3 703.9,237.2 Q701.5,240.0 698.4,238.0 Q695.3,235.9 691.9,234.2 Q688.6,232.6 689.1,228.8 Q689.6,225.0 692.5,223.2 Q695.3,221.4 698.4,219.4 Q701.5,217.4 703.7,220.3 Q705.9,223.2 707.4,225.9 Q708.8,228.6 707.5,231.5Z" fill="#303c2e" opacity="0.9"/>
<path d="M720.0,249.5 Q719.7,253.6 715.7,254.0 Q711.7,254.5 707.9,255.1 Q704.2,255.6 702.8,252.1 Q701.4,248.6 701.4,245.5 Q701.5,242.3 702.9,239.0 Q704.4,235.6 708.4,234.1 Q712.3,232.5 715.7,235.2 Q719.1,237.8 719.7,241.6 Q720.3,245.4 720.0,249.5Z" fill="#303c2e" opacity="0.9"/>
<path d="M731.2,269.6 Q730.9,272.8 727.8,273.9 Q724.8,274.9 721.6,275.0 Q718.4,275.0 716.5,272.3 Q714.6,269.6 714.4,266.4 Q714.1,263.1 716.6,261.1 Q719.0,259.0 722.1,257.5 Q725.1,256.1 727.9,258.2 Q730.6,260.4 731.1,263.4 Q731.5,266.5 731.2,269.6Z" fill="#303c2e" opacity="0.9"/>
<path d="M743.3,285.7 Q742.7,289.3 739.2,290.6 Q735.7,291.8 732.7,290.5 Q729.8,289.2 727.7,287.2 Q725.5,285.1 725.5,282.0 Q725.4,278.9 727.1,276.0 Q728.7,273.0 732.3,271.9 Q735.9,270.9 739.3,272.8 Q742.7,274.7 743.3,278.3 Q743.8,282.0 743.3,285.7Z" fill="#303c2e" opacity="0.9"/>
<path d="M757.5,306.6 Q754.6,309.4 752.2,311.8 Q749.8,314.3 746.1,313.8 Q742.4,313.4 739.7,310.5 Q737.1,307.7 737.3,303.8 Q737.4,300.0 739.9,297.0 Q742.3,294.1 746.2,292.8 Q750.1,291.5 752.4,294.7 Q754.8,298.0 757.6,300.9 Q760.4,303.8 757.5,306.6Z" fill="#303c2e" opacity="0.9"/>
<path d="M765.5,325.4 Q765.6,328.4 762.8,330.2 Q760.0,332.0 757.4,330.1 Q754.8,328.3 753.3,326.4 Q751.8,324.6 750.6,321.8 Q749.4,319.0 751.6,316.8 Q753.8,314.5 756.8,314.2 Q759.7,313.9 762.3,315.3 Q764.9,316.7 765.2,319.5 Q765.5,322.3 765.5,325.4Z" fill="#303c2e" opacity="0.9"/>
<path d="M778.4,343.0 Q778.4,346.0 775.7,347.9 Q773.0,349.7 769.8,348.9 Q766.6,348.2 765.2,345.5 Q763.8,342.8 763.9,340.1 Q764.0,337.4 765.7,335.3 Q767.4,333.2 770.0,333.3 Q772.5,333.3 775.4,333.7 Q778.4,334.1 778.3,337.1 Q778.3,340.0 778.4,343.0Z" fill="#303c2e" opacity="0.9"/>
<path d="M790.0,360.9 Q789.4,364.2 786.3,365.6 Q783.1,367.0 780.1,366.1 Q777.0,365.1 774.0,363.2 Q770.9,361.4 772.2,358.0 Q773.4,354.6 775.3,352.4 Q777.2,350.2 780.1,349.5 Q783.0,348.8 785.9,350.0 Q788.9,351.3 789.8,354.4 Q790.6,357.5 790.0,360.9Z" fill="#303c2e" opacity="0.9"/>
<path d="M696.4,175.2 Q694.3,178.1 691.6,179.7 Q688.9,181.2 685.4,181.5 Q681.9,181.8 679.4,179.0 Q676.8,176.2 677.8,172.7 Q678.9,169.2 681.1,167.3 Q683.3,165.3 686.2,163.6 Q689.2,162.0 692.3,163.8 Q695.4,165.6 697.0,169.0 Q698.6,172.4 696.4,175.2Z" fill="#303c2e" opacity="0.9"/>
<path d="M707.9,196.1 Q707.3,199.3 704.5,201.2 Q701.6,203.1 698.4,202.1 Q695.2,201.1 692.6,198.8 Q690.0,196.6 691.3,193.5 Q692.7,190.4 693.9,187.6 Q695.2,184.9 698.3,184.5 Q701.4,184.2 703.6,186.1 Q705.9,188.0 707.2,190.5 Q708.5,193.0 707.9,196.1Z" fill="#303c2e" opacity="0.9"/>
<path d="M723.3,212.2 Q722.3,215.5 719.2,217.2 Q716.1,219.0 713.1,217.5 Q710.1,216.0 707.3,214.2 Q704.5,212.3 705.8,209.2 Q707.0,206.2 708.2,203.3 Q709.4,200.5 712.8,199.5 Q716.1,198.6 718.2,201.1 Q720.3,203.7 722.4,206.3 Q724.4,208.8 723.3,212.2Z" fill="#303c2e" opacity="0.9"/>
<path d="M733.9,233.4 Q732.9,237.4 729.0,238.6 Q725.1,239.7 721.6,239.0 Q718.1,238.2 716.3,235.3 Q714.6,232.5 714.3,229.2 Q714.0,225.9 715.5,222.2 Q717.0,218.4 720.9,219.4 Q724.8,220.4 727.7,221.8 Q730.5,223.2 732.7,226.3 Q734.9,229.3 733.9,233.4Z" fill="#303c2e" opacity="0.9"/>
<path d="M743.2,247.7 Q742.2,250.2 740.0,252.3 Q737.8,254.3 734.7,253.8 Q731.5,253.2 729.4,250.8 Q727.3,248.4 727.0,245.0 Q726.7,241.7 729.1,239.4 Q731.6,237.1 734.8,235.9 Q738.1,234.6 740.1,237.4 Q742.1,240.2 743.2,242.7 Q744.3,245.2 743.2,247.7Z" fill="#303c2e" opacity="0.9"/>
<path d="M756.9,267.1 Q756.0,270.5 752.7,271.6 Q749.4,272.7 746.6,271.6 Q743.8,270.6 741.8,268.6 Q739.7,266.6 739.3,263.5 Q738.9,260.4 741.2,258.4 Q743.6,256.3 746.6,254.9 Q749.6,253.6 752.8,255.1 Q756.1,256.7 757.0,260.2 Q757.9,263.6 756.9,267.1Z" fill="#303c2e" opacity="0.9"/>
<path d="M769.7,287.1 Q768.1,290.2 765.5,293.3 Q763.0,296.4 758.8,295.7 Q754.5,295.0 753.6,291.1 Q752.6,287.1 751.2,283.6 Q749.8,280.1 752.8,277.7 Q755.7,275.2 759.0,275.3 Q762.4,275.4 765.2,276.8 Q768.0,278.1 769.7,281.1 Q771.4,284.1 769.7,287.1Z" fill="#303c2e" opacity="0.9"/>
<path d="M778.5,305.6 Q777.9,308.1 775.7,310.5 Q773.5,312.8 770.4,311.8 Q767.3,310.7 765.1,308.5 Q762.9,306.2 763.2,303.1 Q763.5,300.0 765.7,298.1 Q767.9,296.2 770.5,296.0 Q773.1,295.8 775.6,296.8 Q778.1,297.7 778.6,300.4 Q779.1,303.0 778.5,305.6Z" fill="#303c2e" opacity="0.9"/>
<path d="M791.9,322.7 Q791.0,325.9 788.1,327.9 Q785.2,329.8 781.9,328.7 Q778.7,327.6 776.6,325.2 Q774.4,322.7 773.5,319.1 Q772.6,315.5 775.4,313.0 Q778.2,310.5 781.6,310.2 Q785.1,309.9 788.1,311.4 Q791.2,312.9 792.0,316.2 Q792.9,319.5 791.9,322.7Z" fill="#303c2e" opacity="0.9"/>
<path d="M806.9,342.2 Q806.8,346.3 803.1,348.3 Q799.3,350.3 795.1,349.6 Q790.9,348.9 789.6,345.1 Q788.2,341.4 787.6,337.9 Q786.9,334.4 788.8,330.7 Q790.7,327.0 794.8,327.7 Q798.9,328.3 801.7,330.2 Q804.4,332.0 805.7,335.1 Q806.9,338.1 806.9,342.2Z" fill="#303c2e" opacity="0.9"/>
<path d="M819.1,359.9 Q819.2,363.6 815.5,364.4 Q811.9,365.1 809.0,364.3 Q806.1,363.4 803.2,361.6 Q800.3,359.8 800.9,356.3 Q801.5,352.9 803.3,350.1 Q805.2,347.3 808.6,346.8 Q812.0,346.3 815.6,347.5 Q819.1,348.7 819.0,352.4 Q818.9,356.1 819.1,359.9Z" fill="#303c2e" opacity="0.9"/>
<path d="M714.1,157.1 Q711.9,160.2 709.3,163.2 Q706.6,166.1 702.9,164.7 Q699.2,163.3 697.0,160.4 Q694.8,157.6 694.6,154.0 Q694.3,150.3 696.3,146.8 Q698.3,143.3 702.3,143.5 Q706.3,143.6 709.5,145.4 Q712.6,147.3 714.5,150.7 Q716.3,154.0 714.1,157.1Z" fill="#303c2e" opacity="0.9"/>
<path d="M722.4,177.6 Q721.2,180.4 718.6,181.9 Q716.1,183.4 712.6,183.9 Q709.1,184.3 706.7,181.4 Q704.4,178.6 704.1,174.7 Q703.8,170.9 706.4,168.0 Q708.9,165.1 712.7,164.8 Q716.4,164.6 719.6,166.2 Q722.8,167.9 723.3,171.4 Q723.7,174.8 722.4,177.6Z" fill="#303c2e" opacity="0.9"/>
<path d="M737.5,196.9 Q737.4,200.7 733.7,201.7 Q730.0,202.7 726.8,202.0 Q723.6,201.3 720.2,199.3 Q716.9,197.3 718.5,193.7 Q720.2,190.1 721.6,187.0 Q723.0,183.9 726.6,183.6 Q730.1,183.3 733.7,184.4 Q737.3,185.6 737.5,189.3 Q737.6,193.1 737.5,196.9Z" fill="#303c2e" opacity="0.9"/>
<path d="M749.3,214.8 Q747.0,217.7 744.5,220.5 Q742.1,223.3 738.7,221.6 Q735.4,219.9 731.7,218.1 Q727.9,216.3 728.1,211.9 Q728.3,207.6 731.7,205.3 Q735.0,203.1 738.3,202.7 Q741.7,202.4 745.4,203.4 Q749.0,204.3 750.3,208.1 Q751.6,211.9 749.3,214.8Z" fill="#303c2e" opacity="0.9"/>
<path d="M761.2,234.0 Q761.1,237.5 757.6,238.2 Q754.2,238.8 750.6,239.6 Q747.0,240.4 744.7,237.4 Q742.3,234.3 742.3,230.5 Q742.3,226.7 744.6,223.7 Q747.0,220.6 750.8,220.5 Q754.5,220.4 758.1,221.7 Q761.7,223.0 761.5,226.8 Q761.4,230.5 761.2,234.0Z" fill="#303c2e" opacity="0.9"/>
<path d="M771.7,249.4 Q770.3,251.9 768.0,253.4 Q765.8,255.0 762.5,255.5 Q759.1,256.0 757.8,252.9 Q756.4,249.8 755.7,246.7 Q755.0,243.5 757.1,240.7 Q759.2,237.9 762.6,237.5 Q766.1,237.0 768.9,238.9 Q771.6,240.9 772.4,243.9 Q773.2,246.9 771.7,249.4Z" fill="#303c2e" opacity="0.9"/>
<path d="M783.5,267.5 Q782.4,270.5 779.7,272.5 Q777.0,274.6 774.0,273.1 Q771.0,271.6 768.3,269.8 Q765.5,267.9 765.5,264.4 Q765.6,260.9 768.3,259.1 Q771.1,257.4 774.0,255.8 Q777.0,254.2 779.6,256.4 Q782.2,258.5 783.4,261.5 Q784.5,264.4 783.5,267.5Z" fill="#303c2e" opacity="0.9"/>
<path d="M797.7,287.8 Q797.0,290.8 794.2,292.3 Q791.4,293.9 788.7,292.6 Q786.0,291.4 783.0,289.9 Q780.0,288.4 780.5,285.0 Q781.0,281.6 783.2,279.2 Q785.3,276.9 788.4,275.9 Q791.6,274.8 793.9,277.1 Q796.3,279.4 797.3,282.1 Q798.3,284.8 797.7,287.8Z" fill="#303c2e" opacity="0.9"/>
<path d="M806.0,304.8 Q804.7,307.2 802.4,308.5 Q800.2,309.8 797.4,309.8 Q794.6,309.8 792.5,307.6 Q790.4,305.5 789.7,302.1 Q789.0,298.8 791.6,296.5 Q794.2,294.2 797.3,294.0 Q800.4,293.8 803.0,295.3 Q805.5,296.8 806.4,299.6 Q807.3,302.4 806.0,304.8Z" fill="#303c2e" opacity="0.9"/>
<path d="M820.0,323.8 Q819.3,327.2 816.3,329.6 Q813.2,331.9 809.1,331.4 Q805.1,330.8 802.9,327.5 Q800.6,324.2 800.4,320.3 Q800.3,316.4 802.5,312.8 Q804.7,309.2 809.0,308.6 Q813.3,307.9 816.1,310.9 Q818.8,313.9 819.7,317.1 Q820.6,320.3 820.0,323.8Z" fill="#303c2e" opacity="0.9"/>
<path d="M832.9,344.3 Q832.7,347.7 829.3,348.3 Q825.9,348.8 823.0,348.5 Q820.2,348.2 817.7,346.2 Q815.1,344.2 815.6,341.0 Q816.1,337.7 817.6,334.7 Q819.2,331.6 822.7,331.0 Q826.3,330.3 828.9,332.6 Q831.5,334.9 832.3,337.9 Q833.1,340.8 832.9,344.3Z" fill="#303c2e" opacity="0.9"/>
<path d="M738.5,158.4 Q736.4,161.1 734.1,163.9 Q731.8,166.6 728.7,164.9 Q725.5,163.3 723.7,161.0 Q721.9,158.6 721.2,155.4 Q720.4,152.2 723.1,150.4 Q725.7,148.5 728.6,147.9 Q731.4,147.3 734.4,148.3 Q737.4,149.4 739.0,152.6 Q740.6,155.7 738.5,158.4Z" fill="#303c2e" opacity="0.9"/>
<path d="M752.7,175.4 Q750.6,178.9 747.4,181.0 Q744.2,183.1 740.7,181.9 Q737.2,180.7 733.6,178.5 Q730.1,176.3 731.8,172.5 Q733.4,168.7 735.3,165.9 Q737.2,163.1 740.6,162.7 Q744.0,162.2 747.9,163.1 Q751.8,163.9 753.3,167.9 Q754.7,171.9 752.7,175.4Z" fill="#303c2e" opacity="0.9"/>
<path d="M763.2,194.2 Q761.1,197.0 758.7,199.4 Q756.4,201.8 752.9,201.1 Q749.4,200.3 747.6,197.5 Q745.8,194.7 746.0,191.5 Q746.1,188.4 748.0,186.0 Q749.9,183.5 753.0,182.9 Q756.1,182.4 758.7,184.1 Q761.3,185.9 763.3,188.7 Q765.3,191.5 763.2,194.2Z" fill="#303c2e" opacity="0.9"/>
<path d="M775.6,212.8 Q774.0,215.7 771.3,217.2 Q768.7,218.8 765.3,218.9 Q761.9,218.9 760.2,215.9 Q758.6,212.9 758.8,209.9 Q758.9,206.9 760.4,203.8 Q761.8,200.7 765.4,200.0 Q769.0,199.2 771.9,201.3 Q774.9,203.3 776.0,206.6 Q777.2,209.9 775.6,212.8Z" fill="#303c2e" opacity="0.9"/>
<path d="M787.4,232.9 Q786.9,236.5 783.7,238.9 Q780.4,241.2 776.6,240.0 Q772.8,238.8 770.4,235.9 Q767.9,233.1 768.4,229.4 Q768.8,225.8 770.8,222.8 Q772.8,219.8 776.4,219.9 Q779.9,220.1 783.5,221.0 Q787.1,221.9 787.5,225.6 Q787.9,229.3 787.4,232.9Z" fill="#303c2e" opacity="0.9"/>
<path d="M798.9,251.3 Q796.8,253.8 794.6,255.7 Q792.5,257.7 789.2,257.7 Q785.9,257.7 784.4,254.7 Q783.0,251.8 782.5,248.7 Q781.9,245.6 784.3,243.6 Q786.8,241.7 789.7,240.9 Q792.5,240.1 795.9,241.0 Q799.4,241.8 800.2,245.3 Q801.0,248.9 798.9,251.3Z" fill="#303c2e" opacity="0.9"/>
<path d="M809.7,270.0 Q809.0,273.1 806.2,274.8 Q803.3,276.4 800.5,275.2 Q797.6,274.0 795.5,272.0 Q793.4,270.0 793.3,266.9 Q793.1,263.8 795.0,261.4 Q797.0,258.9 800.2,258.4 Q803.3,257.8 805.8,259.6 Q808.4,261.4 809.4,264.2 Q810.4,267.0 809.7,270.0Z" fill="#303c2e" opacity="0.9"/>
<path d="M823.5,288.3 Q823.0,292.0 819.2,292.5 Q815.5,292.9 812.0,293.5 Q808.5,294.0 806.9,290.8 Q805.3,287.7 804.6,284.3 Q803.9,280.9 806.1,277.7 Q808.2,274.5 811.9,275.1 Q815.6,275.6 818.7,276.8 Q821.8,278.0 822.9,281.3 Q824.1,284.5 823.5,288.3Z" fill="#303c2e" opacity="0.9"/>
<path d="M835.7,305.3 Q834.9,308.5 831.9,309.9 Q828.8,311.2 826.0,310.1 Q823.2,309.1 820.6,307.2 Q818.0,305.4 818.6,302.3 Q819.2,299.1 821.3,297.3 Q823.4,295.5 826.1,294.3 Q828.8,293.0 831.3,294.8 Q833.8,296.5 835.1,299.3 Q836.4,302.1 835.7,305.3Z" fill="#303c2e" opacity="0.9"/>
<path d="M848.7,325.4 Q846.5,328.4 843.8,330.8 Q841.2,333.1 838.2,331.4 Q835.2,329.6 832.9,327.6 Q830.7,325.5 830.0,322.2 Q829.3,318.8 831.7,316.0 Q834.0,313.2 837.6,312.3 Q841.3,311.4 843.9,313.9 Q846.6,316.3 848.7,319.4 Q850.9,322.4 848.7,325.4Z" fill="#303c2e" opacity="0.9"/>
<path d="M858.0,341.2 Q857.6,344.3 854.9,346.4 Q852.2,348.5 849.2,347.1 Q846.1,345.6 844.0,343.5 Q841.8,341.4 840.8,337.9 Q839.9,334.4 842.3,331.4 Q844.7,328.3 848.3,328.9 Q851.9,329.5 854.5,331.1 Q857.0,332.7 857.7,335.5 Q858.4,338.2 858.0,341.2Z" fill="#303c2e" opacity="0.9"/>
<path d="M766.7,160.1 Q766.1,163.9 762.3,164.5 Q758.6,165.1 755.6,164.6 Q752.6,164.0 750.0,162.0 Q747.3,159.9 748.2,156.7 Q749.0,153.4 750.1,149.8 Q751.2,146.3 755.0,146.7 Q758.7,147.2 761.6,148.7 Q764.5,150.1 765.9,153.2 Q767.4,156.4 766.7,160.1Z" fill="#303c2e" opacity="0.9"/>
<path d="M778.6,177.8 Q776.4,180.9 773.7,182.9 Q770.9,184.9 767.1,184.9 Q763.3,184.9 761.6,181.5 Q760.0,178.1 758.7,174.3 Q757.4,170.5 760.2,167.3 Q762.9,164.1 766.9,164.6 Q770.8,165.2 773.9,166.7 Q777.0,168.2 778.9,171.5 Q780.7,174.8 778.6,177.8Z" fill="#303c2e" opacity="0.9"/>
<path d="M787.7,195.0 Q785.8,197.3 783.9,199.7 Q782.1,202.1 779.1,201.1 Q776.1,200.2 774.2,197.9 Q772.2,195.7 773.0,193.0 Q773.7,190.3 775.3,188.5 Q776.9,186.7 779.4,185.8 Q781.8,184.9 784.9,185.6 Q788.1,186.3 788.8,189.5 Q789.5,192.7 787.7,195.0Z" fill="#303c2e" opacity="0.9"/>
<path d="M800.3,213.9 Q799.3,216.1 797.5,218.4 Q795.6,220.7 792.9,219.4 Q790.3,218.1 788.5,216.2 Q786.7,214.3 786.1,211.5 Q785.5,208.6 787.5,206.2 Q789.4,203.8 792.4,203.8 Q795.4,203.9 797.9,205.1 Q800.4,206.3 800.8,209.0 Q801.2,211.7 800.3,213.9Z" fill="#303c2e" opacity="0.9"/>
<path d="M812.5,231.5 Q811.3,234.3 808.8,235.8 Q806.3,237.3 803.5,236.7 Q800.6,236.2 799.2,233.8 Q797.7,231.4 797.2,228.7 Q796.7,225.9 798.4,223.2 Q800.0,220.5 803.2,220.5 Q806.3,220.5 808.6,222.1 Q810.9,223.7 812.3,226.3 Q813.7,228.8 812.5,231.5Z" fill="#303c2e" opacity="0.9"/>
<path d="M828.0,250.4 Q827.7,254.0 824.4,255.7 Q821.0,257.4 817.6,256.5 Q814.1,255.7 811.8,253.0 Q809.5,250.4 809.4,246.8 Q809.4,243.3 811.8,240.8 Q814.3,238.4 817.6,238.0 Q820.8,237.6 823.6,239.2 Q826.3,240.8 827.3,243.8 Q828.2,246.8 828.0,250.4Z" fill="#303c2e" opacity="0.9"/>
<path d="M839.0,268.7 Q838.2,272.2 835.1,274.2 Q831.9,276.3 828.7,274.5 Q825.5,272.8 824.0,270.4 Q822.4,267.9 821.9,265.0 Q821.4,262.1 823.6,260.2 Q825.9,258.2 828.8,256.4 Q831.8,254.5 834.8,256.6 Q837.8,258.6 838.8,261.9 Q839.8,265.2 839.0,268.7Z" fill="#303c2e" opacity="0.9"/>
<path d="M851.6,286.2 Q849.9,289.8 846.5,291.8 Q843.1,293.8 839.2,293.2 Q835.3,292.6 833.3,289.3 Q831.2,286.1 831.3,282.5 Q831.4,278.9 833.6,276.0 Q835.7,273.0 839.5,271.7 Q843.3,270.4 847.1,272.3 Q850.9,274.3 852.1,278.4 Q853.2,282.5 851.6,286.2Z" fill="#303c2e" opacity="0.9"/>
<path d="M863.5,306.6 Q863.5,309.9 860.4,310.9 Q857.3,312.0 854.4,311.4 Q851.5,310.8 849.9,308.5 Q848.3,306.1 847.5,303.1 Q846.7,300.1 849.1,298.0 Q851.5,296.0 854.5,294.7 Q857.5,293.5 859.4,296.1 Q861.3,298.8 862.4,301.1 Q863.5,303.4 863.5,306.6Z" fill="#303c2e" opacity="0.9"/>
<path d="M790.2,156.7 Q788.9,159.5 786.6,162.2 Q784.3,165.0 781.0,163.6 Q777.6,162.2 774.4,160.1 Q771.2,158.1 771.9,154.3 Q772.6,150.4 775.3,148.5 Q778.1,146.5 781.1,145.0 Q784.2,143.5 786.8,145.8 Q789.4,148.1 790.4,151.0 Q791.4,154.0 790.2,156.7Z" fill="#303c2e" opacity="0.9"/>
<path d="M805.3,177.1 Q804.2,179.9 802.0,182.9 Q799.7,185.8 796.4,184.0 Q793.2,182.2 791.1,179.9 Q789.0,177.5 789.3,174.5 Q789.6,171.4 791.4,169.0 Q793.1,166.5 796.3,165.4 Q799.5,164.2 803.2,165.4 Q807.0,166.5 806.7,170.4 Q806.3,174.4 805.3,177.1Z" fill="#303c2e" opacity="0.9"/>
<path d="M816.7,194.5 Q816.3,198.1 813.0,199.9 Q809.7,201.8 805.7,201.7 Q801.6,201.6 800.6,197.7 Q799.5,193.9 798.5,190.5 Q797.6,187.2 800.1,184.6 Q802.7,182.1 806.3,180.6 Q809.9,179.1 812.5,181.9 Q815.2,184.7 816.1,187.8 Q817.1,190.9 816.7,194.5Z" fill="#303c2e" opacity="0.9"/>
<path d="M830.5,211.8 Q828.2,214.6 825.6,216.1 Q823.0,217.7 819.4,218.2 Q815.8,218.7 813.8,215.6 Q811.7,212.5 812.8,209.3 Q813.8,206.2 815.5,203.9 Q817.2,201.6 820.1,201.0 Q823.0,200.4 825.6,201.8 Q828.3,203.2 830.6,206.1 Q832.9,209.0 830.5,211.8Z" fill="#303c2e" opacity="0.9"/>
<path d="M844.4,233.1 Q842.9,236.8 839.4,238.3 Q835.9,239.8 832.0,239.8 Q828.1,239.7 825.9,236.5 Q823.7,233.2 824.6,229.7 Q825.4,226.2 827.0,223.1 Q828.6,219.9 832.2,219.4 Q835.9,219.0 839.3,220.6 Q842.6,222.2 844.2,225.8 Q845.8,229.4 844.4,233.1Z" fill="#303c2e" opacity="0.9"/>
<path d="M852.2,248.4 Q850.9,251.7 847.8,253.1 Q844.7,254.5 841.0,254.7 Q837.3,255.0 834.1,252.2 Q831.0,249.4 832.4,245.6 Q833.9,241.7 835.7,238.6 Q837.5,235.5 841.2,234.8 Q844.9,234.2 848.6,235.7 Q852.3,237.3 852.9,241.2 Q853.5,245.1 852.2,248.4Z" fill="#303c2e" opacity="0.9"/>
<path d="M864.8,266.7 Q862.9,269.1 860.9,271.6 Q858.9,274.2 856.2,272.4 Q853.5,270.6 851.7,268.8 Q849.8,267.0 849.4,264.1 Q848.9,261.3 850.6,258.5 Q852.2,255.6 855.5,255.4 Q858.8,255.2 861.7,256.6 Q864.6,258.1 865.7,261.2 Q866.8,264.3 864.8,266.7Z" fill="#303c2e" opacity="0.9"/>
<path d="M818.3,158.5 Q817.3,161.6 814.3,162.4 Q811.3,163.3 808.1,163.7 Q804.8,164.2 803.3,161.3 Q801.8,158.3 801.6,155.3 Q801.3,152.3 803.6,150.4 Q805.9,148.5 808.9,146.5 Q811.8,144.4 814.7,146.7 Q817.6,148.9 818.4,152.2 Q819.2,155.4 818.3,158.5Z" fill="#303c2e" opacity="0.9"/>
<path d="M831.7,177.0 Q831.0,180.4 828.0,182.8 Q825.0,185.3 821.4,184.0 Q817.8,182.7 814.8,180.2 Q811.9,177.7 811.5,173.5 Q811.1,169.3 814.8,167.6 Q818.5,165.8 821.6,164.8 Q824.7,163.8 827.7,165.5 Q830.7,167.2 831.5,170.4 Q832.4,173.6 831.7,177.0Z" fill="#303c2e" opacity="0.9"/>
<path d="M845.9,195.9 Q843.4,198.8 840.8,200.7 Q838.2,202.7 834.4,202.9 Q830.7,203.1 828.3,200.0 Q825.9,196.9 827.1,193.4 Q828.3,190.0 829.4,186.2 Q830.4,182.5 834.4,182.2 Q838.4,182.0 841.9,183.7 Q845.5,185.5 846.9,189.2 Q848.4,193.0 845.9,195.9Z" fill="#303c2e" opacity="0.9"/>
<path d="M857.7,214.3 Q855.7,217.9 852.5,220.5 Q849.2,223.1 844.9,222.5 Q840.5,222.0 838.0,218.4 Q835.4,214.9 835.8,210.8 Q836.1,206.7 838.4,203.1 Q840.6,199.5 844.6,200.4 Q848.7,201.3 851.9,202.6 Q855.2,203.8 857.4,207.2 Q859.7,210.6 857.7,214.3Z" fill="#303c2e" opacity="0.9"/>
<rect x="300" y="260" width="14" height="6" fill="#d9d8d4" opacity="0.85" transform="rotate(-25 300 260)"/>
<rect x="312" y="275" width="10" height="8" fill="#d9d8d4" opacity="0.85" transform="rotate(-25 312 275)"/>
<rect x="320" y="290" width="16" height="6" fill="#d9d8d4" opacity="0.85" transform="rotate(-25 320 290)"/>
<rect x="335" y="300" width="12" height="5" fill="#d9d8d4" opacity="0.85" transform="rotate(-25 335 300)"/>
<rect x="350" y="292" width="14" height="6" fill="#d9d8d4" opacity="0.85" transform="rotate(-25 350 292)"/>
<rect x="298" y="290" width="8" height="12" fill="#d9d8d4" opacity="0.85" transform="rotate(-25 298 290)"/>
<path d="M560.5,260.0 L588.5,247.0 L596.0,267.7 L568.0,280.4Z" fill="#92908c" />
<path d="M560.5,260.0 L588.5,247.0" fill="none" stroke="#2f2f2b" stroke-width="2.5" />
<path d="M583.4,293.0 L621.7,283.0 L634.4,311.0 L591.0,320.0Z" fill="#dbdfe6" />
<path d="M583.4,293.0 L600.0,289.0 L606.0,300.0 L589.0,305.0Z" fill="#7e7167" />
<path d="M130.0,0.0 L140.0,0.0 L152.0,64.0 L242.0,241.0 L295.0,345.0 L394.0,482.0 L381.0,482.0 L283.0,345.0 L230.0,241.0 L140.0,64.0Z" fill="#787d65" />
<path d="M106.0,0.0 L130.0,0.0 L164.0,64.0 L254.0,241.0 L306.0,345.0 L381.0,482.0 L352.0,482.0 L283.0,345.0 L230.0,241.0 L140.0,64.0Z" fill="#aeada7" />
<path d="M178.0,169.0 L246.0,277.0 L283.0,349.0 L340.0,482.0" fill="none" stroke="#2c2c25" stroke-width="1.8" opacity="0.85"/>
<path d="M836.0,0.0 L846.0,0.0 L895.0,232.0 L960.0,456.0 L972.0,482.0 L962.0,482.0 L953.0,456.0 L887.0,232.0Z" fill="#757762" />
<path d="M810.0,0.0 L836.0,0.0 L887.0,232.0 L953.0,456.0 L962.0,482.0 L938.0,482.0 L930.0,456.0 L864.0,232.0Z" fill="#a2a09c" />
<path d="M858.0,336.0 L884.0,330.0 L897.0,364.0 L866.0,366.0Z" fill="#abaaa4" />
<path d="M468.0,482.0 L573.0,448.0 L693.0,406.0 L866.0,352.0 L870.0,365.0 L922.6,456.0 L938.0,482.0Z" fill="#7d705f" />
<clipPath id="cpm"><path d="M468,482 L573,448 L693,406 L866,352 L870,365 L922.6,456 L938,482Z"/></clipPath><g clip-path="url(#cpm)">
<path d="M560.0,440.0 L900.0,328.0" fill="none" stroke="#564b41" stroke-width="2.5" opacity="0.75"/>
<path d="M560.0,451.0 L900.0,339.0" fill="none" stroke="#564b41" stroke-width="2.5" opacity="0.75"/>
<path d="M560.0,462.0 L900.0,350.0" fill="none" stroke="#564b41" stroke-width="2.5" opacity="0.75"/>
<path d="M560.0,473.0 L900.0,361.0" fill="none" stroke="#564b41" stroke-width="2.5" opacity="0.75"/>
<path d="M560.0,484.0 L900.0,372.0" fill="none" stroke="#564b41" stroke-width="2.5" opacity="0.75"/>
<path d="M560.0,495.0 L900.0,383.0" fill="none" stroke="#564b41" stroke-width="2.5" opacity="0.75"/>
<path d="M560.0,506.0 L900.0,394.0" fill="none" stroke="#564b41" stroke-width="2.5" opacity="0.75"/>
<path d="M560.0,517.0 L900.0,405.0" fill="none" stroke="#564b41" stroke-width="2.5" opacity="0.75"/>
<path d="M560.0,528.0 L900.0,416.0" fill="none" stroke="#564b41" stroke-width="2.5" opacity="0.75"/>
<path d="M560.0,539.0 L900.0,427.0" fill="none" stroke="#564b41" stroke-width="2.5" opacity="0.75"/>
<path d="M560.0,550.0 L900.0,438.0" fill="none" stroke="#564b41" stroke-width="2.5" opacity="0.75"/>
<path d="M560.0,561.0 L900.0,449.0" fill="none" stroke="#564b41" stroke-width="2.5" opacity="0.75"/>
</g>
<path d="M458.0,482.0 L573.0,448.0 L693.0,406.0 L866.0,352.0 L869.0,364.5 L693.0,425.0 L573.0,466.0 L520.0,482.0Z" fill="#a8a7a2" />
<path d="M846.0,0.0 L1064.0,0.0 L1064.0,173.0 L912.4,209.0 L881.8,191.0Z" fill="#6e6154" />
<path d="M851.0,0.0 L968.0,0.0 L853.7,25.5Z" fill="#5a6147" />
<path d="M853.7,25.5 L968.0,0.0" fill="none" stroke="#272722" stroke-width="4" />
<path d="M852.0,50.0 L1064.0,14.0" fill="none" stroke="#988f80" stroke-width="6" opacity="0.55"/>
<path d="M860.0,75.0 L1064.0,42.0" fill="none" stroke="#8e8475" stroke-width="4" opacity="0.35"/>
<path d="M851.0,0.0 L853.7,25.5" fill="none" stroke="#272722" stroke-width="3" />
<path d="M895.0,62.0 L945.0,54.0" fill="none" stroke="#434e3b" stroke-width="6" />
<path d="M895.0,77.0 L945.0,68.0" fill="none" stroke="#434e3b" stroke-width="6" />
<path d="M895.0,92.0 L945.0,82.0" fill="none" stroke="#434e3b" stroke-width="6" />
<path d="M895.0,107.0 L945.0,96.0" fill="none" stroke="#434e3b" stroke-width="6" />
<path d="M895.0,122.0 L945.0,110.0" fill="none" stroke="#434e3b" stroke-width="6" />
<path d="M978.0,28.0 L1064.0,18.0 L1064.0,160.0 L990.0,168.0 L962.0,110.0 L972.0,60.0Z" fill="#585d49" opacity="0.85"/>
<path d="M1000.0,83.8 Q999.1,87.6 995.6,89.7 Q992.1,91.8 988.4,90.4 Q984.8,89.0 982.1,86.4 Q979.3,83.9 980.1,80.3 Q981.0,76.7 983.2,74.4 Q985.4,72.0 988.6,70.8 Q991.8,69.5 994.9,71.4 Q998.1,73.2 999.5,76.6 Q1000.9,80.0 1000.0,83.8Z" fill="#374531" opacity="0.85"/>
<path d="M1016.8,57.5 Q1016.0,60.0 1013.8,61.9 Q1011.6,63.9 1008.1,64.1 Q1004.6,64.4 1002.4,61.5 Q1000.2,58.6 1001.5,55.5 Q1002.9,52.4 1004.3,50.0 Q1005.7,47.5 1008.6,46.9 Q1011.5,46.3 1014.1,47.9 Q1016.6,49.5 1017.1,52.2 Q1017.6,55.0 1016.8,57.5Z" fill="#374531" opacity="0.85"/>
<path d="M1049.2,48.7 Q1048.8,52.4 1045.5,54.9 Q1042.2,57.3 1038.4,55.8 Q1034.7,54.2 1032.8,51.3 Q1030.8,48.3 1031.0,45.1 Q1031.1,41.8 1033.3,39.5 Q1035.5,37.2 1038.8,35.1 Q1042.1,33.0 1044.9,35.8 Q1047.6,38.6 1048.6,41.8 Q1049.6,45.0 1049.2,48.7Z" fill="#374531" opacity="0.85"/>
<path d="M1059.8,98.6 Q1058.7,102.3 1055.1,102.9 Q1051.5,103.4 1048.5,103.1 Q1045.5,102.8 1043.3,100.5 Q1041.1,98.2 1040.3,94.7 Q1039.5,91.2 1042.0,88.3 Q1044.5,85.4 1048.0,85.6 Q1051.6,85.7 1054.6,87.2 Q1057.7,88.6 1059.3,91.8 Q1061.0,95.0 1059.8,98.6Z" fill="#374531" opacity="0.85"/>
<path d="M1007.9,127.9 Q1007.0,130.9 1004.4,133.0 Q1001.8,135.1 998.8,133.7 Q995.8,132.3 993.0,130.4 Q990.3,128.5 990.1,124.9 Q989.9,121.3 992.6,119.0 Q995.2,116.7 998.5,115.5 Q1001.9,114.3 1005.1,116.2 Q1008.3,118.1 1008.5,121.5 Q1008.7,125.0 1007.9,127.9Z" fill="#374531" opacity="0.85"/>
<path d="M1039.9,139.2 Q1040.1,143.5 1035.9,144.1 Q1031.7,144.7 1027.8,145.2 Q1023.8,145.7 1022.4,142.0 Q1021.1,138.3 1020.7,134.9 Q1020.3,131.5 1022.5,128.5 Q1024.6,125.6 1028.4,124.1 Q1032.2,122.7 1035.6,125.0 Q1039.1,127.4 1039.4,131.2 Q1039.7,135.0 1039.9,139.2Z" fill="#374531" opacity="0.85"/>
<path d="M992.4,153.1 Q992.3,156.2 989.5,157.7 Q986.6,159.3 983.7,158.3 Q980.8,157.2 979.7,154.8 Q978.5,152.4 978.2,149.9 Q977.8,147.4 979.5,145.4 Q981.2,143.4 983.8,142.7 Q986.4,142.1 989.4,142.9 Q992.4,143.8 992.4,146.9 Q992.4,150.0 992.4,153.1Z" fill="#374531" opacity="0.85"/>
<path d="M881.8,191.0 L1064.0,150.0" fill="none" stroke="#2e3328" stroke-width="3" />
<path d="M882.0,191.0 L1064.0,150.0 L1064.0,173.0 L912.4,209.0Z" fill="#4a543e" />
<path d="M912.4,209.0 L1064.0,173.0 L1064.0,232.0 L897.0,232.0Z" fill="#9f927b" />
<path d="M897.0,232.0 L1064.0,232.0 L1064.0,308.5 L938.0,334.0 L912.0,308.5Z" fill="#9b8d78" />
<path d="M988.8,265.0 L1044.9,255.0 L1055.0,283.0 L999.0,299.5Z" fill="#8e8e88" />
<path d="M988.8,266.0 L1044.9,256.0" fill="none" stroke="#20201e" stroke-width="4" />
<path d="M939.9,298.7 Q938.5,304.3 932.9,305.2 Q927.3,306.0 922.6,305.6 Q917.9,305.3 913.4,302.1 Q908.9,298.8 910.0,293.4 Q911.1,287.9 914.5,284.4 Q917.9,280.8 922.6,280.4 Q927.3,280.1 931.1,282.3 Q935.0,284.6 938.1,288.8 Q941.3,293.0 939.9,298.7Z" fill="#394935" opacity="0.9"/>
<path d="M958.1,288.0 Q957.2,291.0 954.4,292.4 Q951.5,293.8 948.4,293.5 Q945.3,293.2 943.6,290.6 Q942.0,287.9 942.4,285.2 Q942.9,282.4 944.0,279.4 Q945.1,276.5 948.3,276.5 Q951.5,276.5 954.3,277.8 Q957.1,279.1 958.0,282.0 Q958.9,285.0 958.1,288.0Z" fill="#394935" opacity="0.85"/>
<path d="M938.0,334.0 L1064.0,313.5 L1064.0,410.0 L950.0,430.0Z" fill="#706152" />
<path d="M950.0,425.0 L1064.0,405.0 L1064.0,482.0 L960.0,482.0Z" fill="#5f6c51" />
<rect x="260.0" y="0" width="1" height="482" fill="#fff" opacity="0.3"/>
<rect x="542.0" y="0" width="1" height="482" fill="#fff" opacity="0.3"/>
<rect x="824.0" y="0" width="1" height="482" fill="#fff" opacity="0.3"/>
<rect x="0" y="64.0" width="1064" height="1" fill="#fff" opacity="0.3"/>
<rect x="0" y="345.0" width="1064" height="1" fill="#fff" opacity="0.3"/><rect width="1064" height="482" filter="url(#nz)" opacity="0.26" style="mix-blend-mode:overlay"/><text x="180" y="121" transform="rotate(60 180 121)" font-family="Liberation Sans" font-size="18" fill="#fff" stroke="#2a2a2a" stroke-width="2.6" paint-order="stroke" stroke-linejoin="round">Via Aniene</text>
<text x="814" y="-3" transform="rotate(77 814 -3)" font-family="Liberation Sans" font-size="18" fill="#fff" stroke="#2a2a2a" stroke-width="2.6" paint-order="stroke" stroke-linejoin="round">ei Frutteti</text>
<text x="872" y="230" transform="rotate(74 872 230)" font-family="Liberation Sans" font-size="18" fill="#fff" stroke="#2a2a2a" stroke-width="2.6" paint-order="stroke" stroke-linejoin="round">Via dei Frutteti</text>
<text x="497" y="484" transform="rotate(-23 497 484)" font-family="Liberation Sans" font-size="18" fill="#fff" stroke="#2a2a2a" stroke-width="2.6" paint-order="stroke" stroke-linejoin="round">Via Mincio</text><circle cx="518" cy="143" r="13.4" fill="#f26a0c" stroke="#fff" stroke-width="1.7"/><text x="518" y="157.5" text-anchor="middle" font-family="Liberation Sans" font-weight="bold" font-size="13.5" fill="#fff" stroke="#000" stroke-width="3.2" paint-order="stroke" stroke-linejoin="round">172</text><circle cx="367" cy="247" r="13.4" fill="#f26a0c" stroke="#fff" stroke-width="1.7"/><text x="367" y="261.5" text-anchor="middle" font-family="Liberation Sans" font-weight="bold" font-size="13.5" fill="#fff" stroke="#000" stroke-width="3.2" paint-order="stroke" stroke-linejoin="round">173</text><circle cx="553" cy="291" r="13.4" fill="#f26a0c" stroke="#fff" stroke-width="1.7"/><text x="553" y="305.5" text-anchor="middle" font-family="Liberation Sans" font-weight="bold" font-size="13.5" fill="#fff" stroke="#000" stroke-width="3.2" paint-order="stroke" stroke-linejoin="round">182</text><circle cx="556" cy="270" r="13.4" fill="#f26a0c" stroke="#fff" stroke-width="1.7"/><text x="556" y="284.5" text-anchor="middle" font-family="Liberation Sans" font-weight="bold" font-size="13.5" fill="#fff" stroke="#000" stroke-width="3.2" paint-order="stroke" stroke-linejoin="round">177</text><circle cx="951" cy="457" r="13.4" fill="#f26a0c" stroke="#fff" stroke-width="1.7"/>
<rect x="9" y="9" width="31" height="56" rx="4" fill="#fff" fill-opacity="0.45"/>
<rect x="12" y="13" width="25" height="24" rx="3" fill="#4f74a6" fill-opacity="0.88"/>
<rect x="12" y="38" width="25" height="24" rx="3" fill="#4f74a6" fill-opacity="0.88"/>
<path d="M24.5 18.5 V31.5 M18 25 H31" stroke="#fff" stroke-width="3"/>
<path d="M20 50 H29" stroke="#fff" stroke-width="3"/>
<rect x="11.5" y="137.5" width="36" height="36" fill="#fff" stroke="#000" stroke-width="1.6"/><svg x="14.5" y="140.5" width="30" height="30" viewBox="0 0 30 30"><rect width="30" height="30" fill="#fdf6e0"/><path d="M0 0 H8 C5 6 4 10 6 14 C7 18 10 20 12 22 C7 22 3 24 0 27 Z" fill="#6db3ea"/><path d="M15 0 C15 8 20 14 21 20 C22 24 22 27 22 30" stroke="#f0a020" stroke-width="2.2" fill="none"/><path d="M9 0 L14 6 L11 12 L15 20 L16 30 M19 11 L30 11 M12 12 L5 16" stroke="#f2c486" stroke-width="1" fill="none"/></svg><rect x="11.5" y="178.5" width="36" height="36" fill="#fff" stroke="#000" stroke-width="1.6"/><svg x="14.5" y="181.5" width="30" height="30" viewBox="0 0 30 30"><rect width="30" height="30" fill="#b9e4a6"/><path d="M0 0 H8 C5 6 4 10 6 14 C7 18 10 20 12 22 C7 22 3 24 0 27 Z" fill="#6db3ea"/><path d="M0 27 C3 24 7 22 12 22" stroke="#fff" stroke-width="1" fill="none"/><path d="M15 0 C15 8 20 14 21 20 C22 24 22 27 22 30" stroke="#666" stroke-width="1.2" fill="none"/><path d="M0 20 L30 14" stroke="#cde8bd" stroke-width="1" fill="none"/></svg><rect x="11.5" y="220.5" width="36" height="36" fill="#fff" stroke="#000" stroke-width="1.6"/><svg x="14.5" y="223.5" width="30" height="30" viewBox="0 0 30 30"><rect width="30" height="30" fill="#12842a"/><path d="M0 0 H9 C7 8 5 14 0 22 Z" fill="#1a5ec0"/><path d="M9 0 H14 C12 4 13 8 14 12 C11 16 14 22 30 30 H0 V22 C5 14 7 8 9 0 Z" fill="#5cb665"/></svg><rect x="11.5" y="262.5" width="36" height="36" fill="#fff" stroke="#000" stroke-width="1.6"/><svg x="14.5" y="265.5" width="30" height="30" viewBox="0 0 30 30"><rect width="30" height="30" fill="#12842a"/><path d="M0 0 H9 C7 8 5 14 0 22 Z" fill="#1a5ec0"/><path d="M9 0 H14 C12 4 13 8 14 12 C11 16 14 22 24 30 H0 V22 C5 14 7 8 9 0 Z" fill="#5cb665"/><path d="M10 0 L18 12 L19 30 M17 0 V30 M20 14 H30 M6 22 L18 20 M24 0 V14" stroke="#e9c94c" stroke-width="1" fill="none"/></svg><path d="M12 420 V459 M12 443 H90 V466 M64 420 V443" stroke="#000" stroke-width="2" fill="none"/><text x="7" y="471.8" font-family="Liberation Serif" font-size="22" fill="#fff" stroke="#222" stroke-width="1.2" stroke-opacity="0.6" paint-order="stroke">Google</text><rect x="780" y="460" width="284" height="22" fill="#f5f5f5" fill-opacity="0.75"/><text x="786" y="475.5" font-family="Liberation Sans" font-size="11" fill="#444">Map data ©2015 Google Immagini ©2015 , DigitalGlobe</text></svg>

<!-- bottom links -->
<div class="a lk" style="left:1179px;top:907px;line-height:22px;letter-spacing:-0.05px">Reimposta</div>
<div class="a" style="left:1256.5px;top:912px;width:2.2px;height:14px;background:#3a3026"></div>
<div class="a lk" style="left:1264px;top:907px;line-height:22px;letter-spacing:0.25px">Punti di riferimenti</div>
<div class="a" style="left:1396px;top:912px;width:2.2px;height:14px;background:#3a3026"></div>
<div class="a lk" style="left:1404px;top:907px;line-height:22px">Mostra chiave</div>
<div class="inp" style="left:806px;top:928px;width:181px;height:33px"></div>
<div class="inp" style="left:991px;top:928px;width:167px;height:33px"></div>
<div class="a" style="left:1000px;top:935px;line-height:22px;color:#3d3d3d">Indirizzo</div>
<svg class="a" style="left:1144px;top:939px" width="8" height="9"><path d="M1 1.5 L7 1.5 L4 7.5 Z" fill="#111"/></svg>
<div class="btn" style="left:1162px;top:928px;width:80px;height:33px;line-height:33px">Ricerca</div>
<!-- bottom-left partial icon -->
<svg class="a" style="left:10px;top:970px" width="40" height="11"><ellipse cx="18" cy="20" rx="16" ry="14" fill="#dfe6ee" stroke="#3d5878" stroke-width="1.5"/></svg>
</body></html>
